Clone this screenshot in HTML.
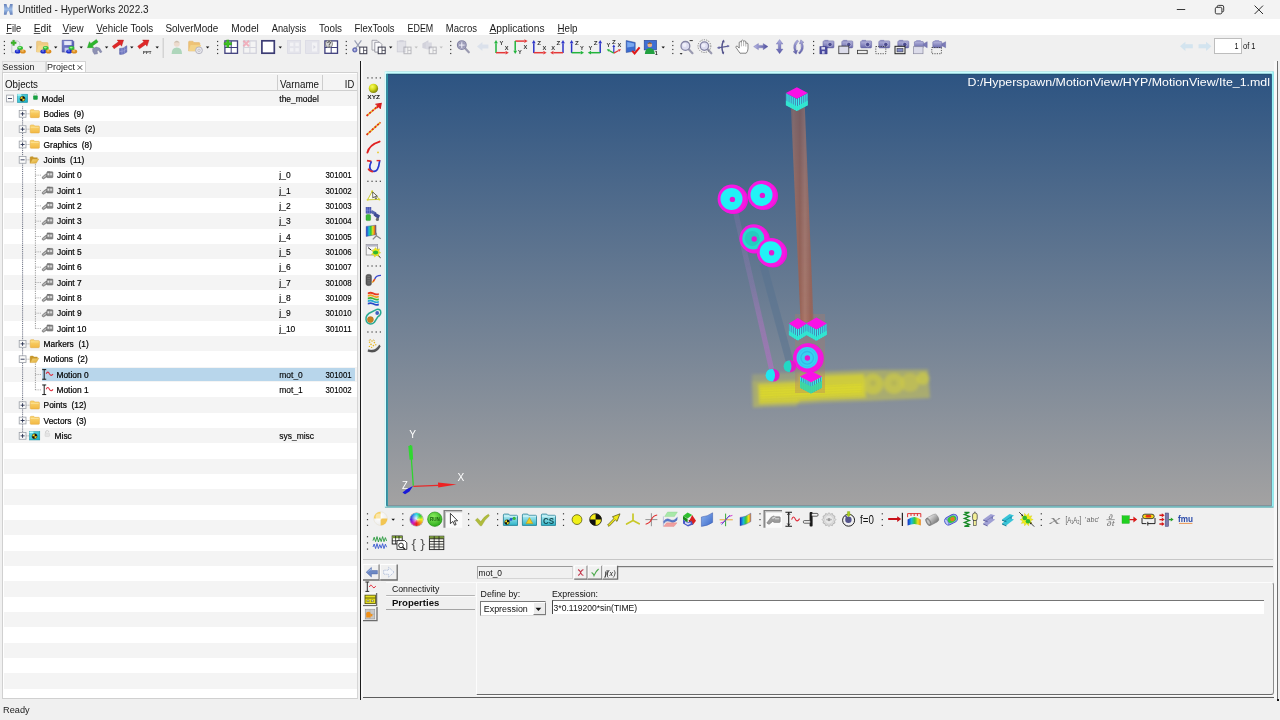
<!DOCTYPE html><html><head><meta charset="utf-8"><title>Untitled - HyperWorks 2022.3</title><style>
html,body{margin:0;padding:0;}
body{width:1280px;height:720px;overflow:hidden;background:#f0f0f0;font-family:"Liberation Sans",sans-serif;position:relative;color:#000;}
.a{position:absolute;}
svg{position:absolute;left:0;top:0;will-change:transform;}
svg text{font-family:"Liberation Sans",sans-serif;white-space:pre;}
svg text.sf{font-family:"Liberation Serif",serif;}
</style></head><body>
<div class="a" style="left:0;top:0;width:1280px;height:19px;background:#f3f3f3;"></div>
<div class="a" style="left:0;top:19px;width:1280px;height:16px;background:#fff;"></div>
<div class="a" style="left:1214px;top:38px;width:28px;height:16px;background:#fff;border:1px solid #bdbdbd;box-sizing:border-box;"></div>
<div class="a" style="left:2px;top:61px;width:44px;height:12px;border:1px solid #dcdcdc;border-bottom:none;box-sizing:border-box;background:#f1f1f1"></div>
<div class="a" style="left:46px;top:61px;width:40px;height:13px;background:#fff;border:1px solid #d4d4d4;border-bottom:none;box-sizing:border-box;"></div>
<div class="a" style="left:1.8px;top:71.8px;width:356.6px;height:627.6px;border:1.7px solid #d0d0d0;border-right:1.2px solid #d6d6d6;border-bottom:1.2px solid #d0d0d0;box-sizing:border-box;background:#fff;"></div>
<div class="a" style="left:3.6px;top:90.60px;width:353.4px;height:15.34px;background:#f4f4f4;"></div>
<div class="a" style="left:3.6px;top:121.27px;width:353.4px;height:15.33px;background:#f4f4f4;"></div>
<div class="a" style="left:3.6px;top:151.94px;width:353.4px;height:15.34px;background:#f4f4f4;"></div>
<div class="a" style="left:3.6px;top:182.61px;width:353.4px;height:15.33px;background:#f4f4f4;"></div>
<div class="a" style="left:3.6px;top:213.28px;width:353.4px;height:15.34px;background:#f4f4f4;"></div>
<div class="a" style="left:3.6px;top:243.95px;width:353.4px;height:15.33px;background:#f4f4f4;"></div>
<div class="a" style="left:3.6px;top:274.62px;width:353.4px;height:15.34px;background:#f4f4f4;"></div>
<div class="a" style="left:3.6px;top:305.29px;width:353.4px;height:15.34px;background:#f4f4f4;"></div>
<div class="a" style="left:3.6px;top:335.96px;width:353.4px;height:15.33px;background:#f4f4f4;"></div>
<div class="a" style="left:3.6px;top:366.63px;width:353.4px;height:15.34px;background:#f4f4f4;"></div>
<div class="a" style="left:3.6px;top:397.30px;width:353.4px;height:15.33px;background:#f4f4f4;"></div>
<div class="a" style="left:3.6px;top:427.97px;width:353.4px;height:15.34px;background:#f4f4f4;"></div>
<div class="a" style="left:3.6px;top:458.64px;width:353.4px;height:15.34px;background:#f4f4f4;"></div>
<div class="a" style="left:3.6px;top:489.31px;width:353.4px;height:15.33px;background:#f4f4f4;"></div>
<div class="a" style="left:3.6px;top:519.98px;width:353.4px;height:15.34px;background:#f4f4f4;"></div>
<div class="a" style="left:3.6px;top:550.65px;width:353.4px;height:15.34px;background:#f4f4f4;"></div>
<div class="a" style="left:3.6px;top:581.32px;width:353.4px;height:15.33px;background:#f4f4f4;"></div>
<div class="a" style="left:3.6px;top:611.99px;width:353.4px;height:15.34px;background:#f4f4f4;"></div>
<div class="a" style="left:3.6px;top:642.66px;width:353.4px;height:15.33px;background:#f4f4f4;"></div>
<div class="a" style="left:3.6px;top:673.33px;width:353.4px;height:15.34px;background:#f4f4f4;"></div>
<div class="a" style="left:3.6px;top:73.5px;width:353.4px;height:17.3px;background:#f4f4f4;border-bottom:1px solid #cfcfcf;box-sizing:border-box;"></div>
<div class="a" style="left:277px;top:75px;width:1px;height:15px;background:#cdcdcd;"></div>
<div class="a" style="left:322px;top:75px;width:1px;height:15px;background:#cdcdcd;"></div>
<div class="a" style="left:42px;top:367.53px;width:313.4px;height:13.84px;background:#b8d6eb;"></div>
<div class="a" style="left:359.5px;top:61px;width:1.5px;height:639px;background:#1c1c1c;"></div>
<div class="a" style="left:362px;top:559px;width:911px;height:1px;background:#c6c6c6;"></div>
<div class="a" style="left:618px;top:565.8px;width:655px;height:1.3px;background:#7a7a7a;"></div>
<div class="a" style="left:618px;top:567.1px;width:655px;height:0.8px;background:#d8d8d8;"></div>
<div class="a" style="left:1274px;top:61px;width:3px;height:638px;background:#f8f8f8;"></div>
<div class="a" style="left:1277px;top:61px;width:1.3px;height:639px;background:#6e6e6e;"></div>
<div class="a" style="left:1276.6px;top:699.4px;width:2px;height:1.2px;background:#111;"></div>
<div class="a" style="left:361px;top:61px;width:2px;height:636px;background:#f8f8f8;"></div>
<div class="a" style="left:475.6px;top:581.6px;width:798.8px;height:113.4px;border-left:1px solid #fcfcfc;border-top:1px solid #fcfcfc;border-bottom:1.3px solid #6a6a6a;border-right:1px solid #8c8c8c;border-radius:0 3px 3px 0;box-sizing:border-box;background:#f1f1f1;"></div>
<div class="a" style="left:476px;top:695.2px;width:797px;height:1px;background:#fafafa;"></div>
<div class="a" style="left:363px;top:696.7px;width:911px;height:1.3px;background:#5c5c5c;"></div>
<div class="a" style="left:477px;top:566.2px;width:96.4px;height:12.6px;border:1px solid #d4d4d4;border-top:1px solid #9a9a9a;border-left:1px solid #a8a8a8;box-sizing:border-box;background:#f0f0f0;"></div>
<div class="a" style="left:385.6px;top:582.4px;width:90px;height:1px;background:#fbfbfb;"></div>
<div class="a" style="left:385.6px;top:594.9px;width:89.6px;height:1px;background:#b4b4b4;border-radius:1px;"></div>
<div class="a" style="left:385.6px;top:596px;width:90px;height:1px;background:#fafafa;"></div>
<div class="a" style="left:385.6px;top:609px;width:89.6px;height:1px;background:#a4a4a4;"></div>
<div class="a" style="left:480.2px;top:600.5px;width:66px;height:15.2px;border-top:1.7px solid #7a7a7a;border-left:1.7px solid #7a7a7a;border-right:1px solid #dcdcdc;border-bottom:1px solid #dcdcdc;box-sizing:border-box;background:#fff;"></div>
<div class="a" style="left:532.6px;top:602px;width:13px;height:13px;background:#ececec;border-right:1.2px solid #7c7c7c;border-bottom:1.2px solid #7c7c7c;border-left:1px solid #fff;border-top:1px solid #fff;box-sizing:border-box;"></div>
<div class="a" style="left:551.6px;top:600.4px;width:712.6px;height:13.6px;background:#fff;border-top:1.8px solid #757575;border-left:1.3px solid #444;box-sizing:border-box;"></div>
<div class="a" style="left:409.8px;top:512.7px;width:13px;height:13px;border-radius:50%;background:radial-gradient(circle at 45% 42%,rgba(255,255,255,0.85) 0,rgba(255,255,255,0) 45%),conic-gradient(from 0deg,#20d8e0,#30d040,#e8f020,#f09020,#e82020,#d020c0,#5028d8,#2070e8,#20d8e0);box-shadow:0 0 0 0.5px rgba(60,60,60,0.5);"></div>
<svg width="1280" height="720" viewBox="0 0 1280 720">
<defs>
<linearGradient id="vg" x1="0" y1="0" x2="0" y2="1"><stop offset="0" stop-color="#2d5482"/><stop offset="1" stop-color="#a3a2a2"/></linearGradient>
<linearGradient id="rod" x1="0" y1="0" x2="1" y2="0"><stop offset="0" stop-color="#a8705f" stop-opacity="0.75"/><stop offset="0.12" stop-color="#a8705f"/><stop offset="0.4" stop-color="#9d5f4e"/><stop offset="0.62" stop-color="#ae7767"/><stop offset="0.88" stop-color="#9c6152"/><stop offset="1" stop-color="#9c6152" stop-opacity="0.7"/></linearGradient>
<linearGradient id="rodfade" gradientUnits="userSpaceOnUse" x1="0" y1="106" x2="0" y2="322"><stop offset="0" stop-color="#fff" stop-opacity="0.62"/><stop offset="0.5" stop-color="#fff" stop-opacity="0.8"/><stop offset="1" stop-color="#fff" stop-opacity="0.9"/></linearGradient>
<mask id="rodm"><rect x="780" y="100" width="50" height="230" fill="url(#rodfade)"/></mask>
<filter id="bl1" x="-20%" y="-50%" width="140%" height="200%"><feGaussianBlur stdDeviation="1.6"/></filter>
<filter id="bl03" x="-20%" y="-5%" width="140%" height="110%"><feGaussianBlur stdDeviation="0.45"/></filter>
<pattern id="cst" width="1.9" height="4" patternUnits="userSpaceOnUse"><rect width="1.9" height="4" fill="#3e86ac"/><rect width="0.95" height="4" fill="#3cf0f4"/></pattern>
<linearGradient id="pl" gradientUnits="userSpaceOnUse" x1="0" y1="212" x2="0" y2="369"><stop offset="0" stop-color="#9a78b8" stop-opacity="0.22"/><stop offset="0.45" stop-color="#9a78b8" stop-opacity="0.38"/><stop offset="0.7" stop-color="#aa74be" stop-opacity="0.55"/><stop offset="1" stop-color="#b070c2" stop-opacity="0.66"/></linearGradient>
</defs>
<rect x="384.9" y="71.5" width="888.7" height="436.3" fill="#74b8bc"/>
<rect x="1271.6" y="71.5" width="2" height="435" fill="#93f2f6"/>
<rect x="384.9" y="71.5" width="887.5" height="2.3" fill="#c8feff"/>
<rect x="384.9" y="71.5" width="1.6" height="435.2" fill="#d4ffff"/>
<rect x="386.3" y="73.8" width="885.4" height="431.9" fill="#1f4e72"/>
<rect x="386.5" y="74.2" width="1.5" height="431.5" fill="#2c9aaa"/>
<rect x="387.9" y="74.9" width="883.8" height="430.8" fill="url(#vg)"/>
<g filter="url(#bl1)">
<polygon points="752,374.5 797,372.5 797,380 752,382" fill="#cfcc4a" opacity="0.28"/>
<polygon points="752,381.5 797,379.5 797,372.5 866,370 928,369.5 930,398 868,401 822,402.5 797,404 797,406 753,407.5" fill="#cdca48" opacity="0.5"/>
<polygon points="758,384 799,382 799,376.5 864,374 866,397.5 822,399 799,400.5 799,402.5 759,404" fill="#e2de26" opacity="0.66"/>
<polygon points="760,388 820,385.5 862,383.5 862,393 820,395 760,398.5" fill="#ece618" opacity="0.4"/>
<circle cx="873" cy="384" r="10.5" fill="#d6d238" opacity="0.6"/>
<circle cx="894" cy="383.5" r="10.5" fill="#d2ce40" opacity="0.6"/>
<circle cx="910" cy="382.5" r="9.5" fill="#cfcb46" opacity="0.55"/>
<circle cx="923" cy="378.5" r="6.5" fill="#d4d040" opacity="0.6"/>
<circle cx="873" cy="383" r="3" fill="#a8a860" opacity="0.5"/>
<circle cx="894" cy="383" r="3" fill="#a8a860" opacity="0.4"/>
</g>
<path d="M760 387.0 L822 384.5 L862 382.9" stroke="#c8c43a" stroke-width="0.5" opacity="0.55" fill="none"/>
<path d="M760 389.5 L822 387.0 L862 385.4" stroke="#c8c43a" stroke-width="0.5" opacity="0.55" fill="none"/>
<path d="M760 392.0 L822 389.5 L862 387.9" stroke="#c8c43a" stroke-width="0.5" opacity="0.55" fill="none"/>
<path d="M760 394.5 L822 392.0 L862 390.4" stroke="#c8c43a" stroke-width="0.5" opacity="0.55" fill="none"/>
<path d="M760 397.0 L822 394.5 L862 392.9" stroke="#c8c43a" stroke-width="0.5" opacity="0.55" fill="none"/>
<path d="M760 399.5 L822 397.0 L862 395.4" stroke="#c8c43a" stroke-width="0.5" opacity="0.55" fill="none"/>
<path d="M760 402.0 L822 399.5 L862 397.9" stroke="#c8c43a" stroke-width="0.5" opacity="0.55" fill="none"/>
<rect x="795" y="314" width="30" height="79" fill="#b07a68" opacity="0.33"/>
<line x1="735.5" y1="212" x2="771.5" y2="369" stroke="url(#pl)" stroke-width="5.2" filter="url(#bl03)"/>
<line x1="763" y1="264" x2="789.5" y2="361" stroke="#567290" stroke-width="7.6" opacity="0.5" filter="url(#bl03)"/>
<g mask="url(#rodm)"><polygon points="790.8,106 804.8,106 813.6,322 800.6,322" fill="url(#rod)" filter="url(#bl03)"/></g>
<polygon points="785.9,93.1 796.9,98.8 807.8,93.1 807.8,105.19999999999999 796.9,110.89999999999999 785.9,105.19999999999999" fill="url(#cst)"/>
<polygon points="785.9,100.60 796.9,106.30 807.8,100.60 807.8,105.19999999999999 796.9,110.89999999999999 785.9,105.19999999999999" fill="#30e8d0" opacity="0.92"/>
<polygon points="785.9,93.1 796.9,87.2 807.8,93.1 796.9,98.8" fill="#fb10e6"/>
<circle cx="733.6999999999999" cy="199.7" r="14.3" fill="#ee14da"/><circle cx="732.0" cy="199.0" r="14.4" fill="#f618e2"/><circle cx="731.5" cy="198.89999999999998" r="11" fill="#22f2f6"/><circle cx="732.4" cy="199.39999999999998" r="2.7" fill="#e21ad0"/>
<circle cx="763.6999999999999" cy="195.7" r="14.3" fill="#ee14da"/><circle cx="762.0" cy="195.0" r="14.4" fill="#f618e2"/><circle cx="761.5" cy="194.89999999999998" r="11" fill="#22f2f6"/><circle cx="762.4" cy="195.39999999999998" r="2.7" fill="#e21ad0"/>
<circle cx="755.5" cy="239.3" r="14.3" fill="#ee14da"/><circle cx="753.8000000000001" cy="238.60000000000002" r="14.4" fill="#f618e2"/><circle cx="753.3000000000001" cy="238.5" r="11" fill="#26dccc"/><circle cx="752.2" cy="238.4" r="7.5" fill="#24c0b4" opacity="0.55"/><circle cx="754.2" cy="239.0" r="2.7" fill="#e21ad0"/>
<circle cx="772.9" cy="253.1" r="14.3" fill="#ee14da"/><circle cx="771.2" cy="252.4" r="14.4" fill="#f618e2"/><circle cx="770.7" cy="252.29999999999998" r="11" fill="#22f2f6"/><circle cx="771.6" cy="252.79999999999998" r="2.7" fill="#e21ad0"/>
<polygon points="788.9,323.6 797.8,329.2 806.7,323.6 806.7,335.0 797.8,340.59999999999997 788.9,335.0" fill="url(#cst)"/>
<polygon points="788.9,330.67 797.8,336.27 806.7,330.67 806.7,335.0 797.8,340.59999999999997 788.9,335.0" fill="#30e8d0" opacity="0.92"/>
<polygon points="788.9,323.6 797.8,318 806.7,323.6 797.8,329.2" fill="#fb10e6"/>
<polygon points="806,323.4 816.4,329.4 826.8,323.4 826.8,334.79999999999995 816.4,340.79999999999995 806,334.79999999999995" fill="url(#cst)"/>
<polygon points="806,330.47 816.4,336.47 826.8,330.47 826.8,334.79999999999995 816.4,340.79999999999995 806,334.79999999999995" fill="#30e8d0" opacity="0.92"/>
<polygon points="806,323.4 816.4,317.6 826.8,323.4 816.4,329.4" fill="#fb10e6"/>
<circle cx="809.2" cy="358.2" r="14.6" fill="#ee18d8"/><circle cx="807.6" cy="357.8" r="14.6" fill="#f416de"/><circle cx="807.2" cy="357.8" r="10.7" fill="#38d2f2"/><circle cx="807.2" cy="357.8" r="6.3" fill="none" stroke="#30bce6" stroke-width="1.3"/><circle cx="807.2" cy="357.8" r="9" fill="none" stroke="#34c4ec" stroke-width="0.8"/><circle cx="807.4" cy="358" r="2.7" fill="#e21ad0"/>
<polygon points="800,376.6 811,382.2 822,376.6 822,387.8 811,393.4 800,387.8" fill="url(#cst)"/>
<polygon points="800,380.86 811,386.46 822,380.86 822,387.8 811,393.4 800,387.8" fill="#40d89c" opacity="0.92"/>
<polygon points="800,376.6 811,371 822,376.6 811,382.2" fill="#fb10e6"/>
<circle cx="790.2" cy="366.3" r="6" fill="#e418cc"/><path d="M789.6 360.3 A6 6 0 1 0 789.6 372.3 A11 11 0 0 0 789.6 360.3Z" fill="#22d8c4"/>
<circle cx="773.3" cy="375.2" r="6.3" fill="#e418cc"/><path d="M773 369 A6.3 6.3 0 1 0 773 381.4 A11 11 0 0 0 773 369Z" fill="#20e6f0"/>
<g>
<line x1="413.3" y1="485.8" x2="410.4" y2="445" stroke="#2fd42f" stroke-width="1.3"/>
<polygon points="408.3,446 412.3,445.6 413.2,459.5 409.6,459.8" fill="#30d830"/>
<line x1="413.3" y1="486.3" x2="438" y2="485.3" stroke="#e62a2a" stroke-width="1.2"/>
<polygon points="438,482.6 456.6,484.4 438.2,487.6" fill="#ee2222"/>
<path d="M413 486 L407 489 L402.5 492.5 L405 494.3 L409.5 491.5 Z" fill="#1a1ad8"/>
</g>
<defs><linearGradient id="hg" x1="0" y1="0" x2="0" y2="1"><stop offset="0" stop-color="#6580b8"/><stop offset="0.5" stop-color="#9cbce8"/><stop offset="1" stop-color="#6580b8"/></linearGradient></defs>
<path d="M3.9 3.9 L6.5 3.9 Q7.1 7.2 8.3 8 Q9.5 7.2 10.1 3.9 L12.7 3.9 Q12.1 9.3 12.7 14.7 L10.1 14.7 Q9.5 11.4 8.3 10.6 Q7.1 11.4 6.5 14.7 L3.9 14.7 Q4.5 9.3 3.9 3.9 Z" fill="url(#hg)"/>
<rect x="1176.8" y="9.1" width="8.4" height="0.9" fill="#222"/>
<rect x="1215.3" y="7.3" width="6.6" height="6.6" rx="1.5" fill="none" stroke="#222" stroke-width="0.9"/><path d="M1217.2 7.2 v-0.5 q0 -1.3 1.3 -1.3 h3.6 q1.6 0 1.6 1.6 v3.6 q0 1.2 -1.2 1.2 h-0.5" fill="none" stroke="#222" stroke-width="0.9"/>
<path d="M1254.6 5.6 l8.4 8.4 M1263 5.6 l-8.4 8.4" stroke="#222" stroke-width="0.95" fill="none"/>
<path d="M77.6 65.2 l4.6 4.6 M82.2 65.2 l-4.6 4.6" stroke="#333" stroke-width="0.9"/>
<defs><linearGradient id="fl" x1="0" y1="0" x2="1" y2="1"><stop offset="0" stop-color="#8890d8"/><stop offset="1" stop-color="#3c44a0"/></linearGradient><linearGradient id="cam" x1="0" y1="0" x2="0" y2="1"><stop offset="0" stop-color="#b4b4dc"/><stop offset="1" stop-color="#6a6aac"/></linearGradient><linearGradient id="arh" x1="0" y1="0" x2="1" y2="0"><stop offset="0" stop-color="#b8b8e4"/><stop offset="1" stop-color="#4c4c9c"/></linearGradient><linearGradient id="arb" x1="0" y1="0" x2="0" y2="1"><stop offset="0" stop-color="#b0b0e0"/><stop offset="1" stop-color="#5a5aa8"/></linearGradient></defs>
<rect x="3.80" y="40.90" width="1.2" height="1.2" fill="#3a3a3a"/>
<rect x="3.80" y="44.90" width="1.2" height="1.2" fill="#3a3a3a"/>
<rect x="3.80" y="48.90" width="1.2" height="1.2" fill="#3a3a3a"/>
<rect x="3.80" y="52.90" width="1.2" height="1.2" fill="#3a3a3a"/>
<path d="M11.799999999999999 41.0 h6.2 l1.8 1.8 v10 h-8z" fill="#eef0f2" stroke="#a8b0b8" stroke-width="0.6"/>
<path d="M11.0 41.9 h1.7 v-1.7 h1.8 v1.7 h1.7 v1.8 h-1.7 v1.7 h-1.8 v-1.7 h-1.7z" fill="#3cb828" stroke="#2a8a1c" stroke-width="0.3"/>
<ellipse cx="20.10" cy="48.10" rx="2.9" ry="2.1" fill="#35c035"/><ellipse cx="19.70" cy="47.60" rx="1.5" ry="0.8" fill="#9df09d"/>
<ellipse cx="17.70" cy="51.50" rx="2.9" ry="2.1" fill="#1c2ccc"/><ellipse cx="17.30" cy="50.90" rx="1.4" ry="0.7" fill="#8a96f0"/>
<ellipse cx="22.90" cy="51.50" rx="2.9" ry="2.1" fill="#dc8c1c"/><ellipse cx="22.50" cy="50.90" rx="1.4" ry="0.7" fill="#f8d088"/>
<path d="M28.90 46.50 h3.4 l-1.7 1.9z" fill="#111"/>
<path d="M36.6 52.0 v-10 q0 -0.8 0.8 -0.8 h3.4 l1.2 1.4 h5.2 q0.8 0 0.8 0.8 v8.6z" fill="#f0c878" stroke="#e0aa50" stroke-width="0.5" opacity="0.9"/>
<path d="M36.6 52.0 l2 -6.5 h10.6 l-2.4 6.5z" fill="#f6d890" opacity="0.95"/>
<ellipse cx="45.70" cy="48.10" rx="2.9" ry="2.1" fill="#35c035"/><ellipse cx="45.30" cy="47.60" rx="1.5" ry="0.8" fill="#9df09d"/>
<ellipse cx="43.30" cy="51.50" rx="2.9" ry="2.1" fill="#1c2ccc"/><ellipse cx="42.90" cy="50.90" rx="1.4" ry="0.7" fill="#8a96f0"/>
<ellipse cx="48.50" cy="51.50" rx="2.9" ry="2.1" fill="#dc8c1c"/><ellipse cx="48.10" cy="50.90" rx="1.4" ry="0.7" fill="#f8d088"/>
<path d="M54.00 46.50 h3.4 l-1.7 1.9z" fill="#111"/>
<path d="M62.2 40.3 h10.4 l1.2 1.2 v10.6 h-11.6z" fill="url(#fl)" stroke="#34388c" stroke-width="0.5"/>
<rect x="64.2" y="41.1" width="7.4" height="4" fill="#e6e8f8"/><rect x="64.6" y="47.7" width="5" height="4.2" fill="#c4c8ec"/>
<ellipse cx="71.50" cy="48.10" rx="2.9" ry="2.1" fill="#35c035"/><ellipse cx="71.10" cy="47.60" rx="1.5" ry="0.8" fill="#9df09d"/>
<ellipse cx="69.10" cy="51.50" rx="2.9" ry="2.1" fill="#1c2ccc"/><ellipse cx="68.70" cy="50.90" rx="1.4" ry="0.7" fill="#8a96f0"/>
<ellipse cx="74.30" cy="51.50" rx="2.9" ry="2.1" fill="#dc8c1c"/><ellipse cx="73.90" cy="50.90" rx="1.4" ry="0.7" fill="#f8d088"/>
<path d="M79.50 46.50 h3.4 l-1.7 1.9z" fill="#111"/>
<polygon points="96.33,39.48 90.76,43.46 89.48,41.67 87.40,47.70 93.78,47.69 92.50,45.90 98.07,41.92" fill="#2cb82c" stroke="#1e8e1e" stroke-width="0.4"/>
<path d="M92.6 48.7 l3.6 -1.6 l3.4 1 l2.4 3.8 l-1.8 0.8 l-1.6 -2.4 l-1.6 0.4 l0.6 3 l-3.2 0.6 l-1.6 -2.6z" fill="#8e92b4" stroke="#6c7096" stroke-width="0.4"/>
<path d="M104.90 46.50 h3.4 l-1.7 1.9z" fill="#111"/>
<polygon points="114.10,48.76 120.26,44.38 121.57,46.21 123.60,40.10 117.16,40.02 118.46,41.85 112.30,46.24" fill="#e02828" stroke="#b01818" stroke-width="0.4"/>
<path d="M119.6 48.5 q3.4 0.6 7.2 -2.8 v6.4 q-3.6 3 -7.2 2.2z" fill="#7078c0" stroke="#4c54a0" stroke-width="0.5"/><path d="M122 48.4 v6 M124.4 47.3 v6.2 M119.6 51.5 q3.6 0.4 7.2 -2.6" stroke="#b8bce8" stroke-width="0.4" fill="none"/>
<path d="M130.10 46.50 h3.4 l-1.7 1.9z" fill="#111"/>
<polygon points="139.50,48.76 145.66,44.38 146.97,46.21 149.00,40.10 142.56,40.02 143.86,41.85 137.70,46.24" fill="#e02828" stroke="#b01818" stroke-width="0.4"/>
<text x="143.0" y="53.7" font-size="4.4" font-weight="bold" fill="#222" textLength="8.4" lengthAdjust="spacingAndGlyphs">PPT</text>
<path d="M155.50 46.50 h3.4 l-1.7 1.9z" fill="#111"/>
<rect x="162.7" y="38" width="0.9" height="20" fill="#c2c2c2"/>
<g opacity="0.36"><circle cx="176.79999999999998" cy="43.7" r="3" fill="#e8b890"/><path d="M174.2 43.1 q2.6 -4.6 5.2 0 q-2.6 -1.6 -5.2 0z" fill="#8a6a40"/><path d="M171.6 53.9 q0.2 -6.4 5.2 -6.4 q5 0 5.2 6.4z" fill="#3aa860"/></g>
<g opacity="0.8"><path d="M188.6 51.0 v-9 q0 -0.8 0.8 -0.8 h3.4 l1.2 1.4 h5 q0.8 0 0.8 0.8 v7.6z" fill="#eeb858" stroke="#dca040" stroke-width="0.5"/><path d="M188.6 51.0 l2 -6 h10.4 l-2.4 6z" fill="#f4cc70"/></g>
<circle cx="199" cy="50.3" r="3.4" fill="#e8e8ee" stroke="#b0b0bc" stroke-width="0.9"/><circle cx="199" cy="50.3" r="1.2" fill="#f4f4f4" stroke="#a8a8b4" stroke-width="0.6"/>
<path d="M205.90 46.50 h3.4 l-1.7 1.9z" fill="#111"/>
<rect x="217.00" y="40.90" width="1.2" height="1.2" fill="#3a3a3a"/>
<rect x="217.00" y="44.90" width="1.2" height="1.2" fill="#3a3a3a"/>
<rect x="217.00" y="48.90" width="1.2" height="1.2" fill="#3a3a3a"/>
<rect x="217.00" y="52.90" width="1.2" height="1.2" fill="#3a3a3a"/>
<g opacity="1"><rect x="224.9" y="40.9" width="12.6" height="12.4" fill="#fff" stroke="#3e3e7c" stroke-width="1.3"/><path d="M231.20000000000002 40.9 v12.4 M224.9 47.5 h12.6" stroke="#3e3e7c" stroke-width="1"/></g>
<path d="M224 42.5 h2.6 v-2.6 h2.4 v2.6 h2.6 v2.4 h-2.6 v2.6 h-2.4 v-2.6 h-2.6z" fill="#3cc020" stroke="#288a14" stroke-width="0.4"/>
<g opacity="0.28"><rect x="243.6" y="40.9" width="12.6" height="12.4" fill="#fff" stroke="#8888aa" stroke-width="1.3"/><path d="M249.9 40.9 v12.4 M243.6 47.5 h12.6" stroke="#8888aa" stroke-width="1"/></g>
<path d="M243.4 40.7 l5.6 5.6 M249 40.7 l-5.6 5.6" stroke="#f0a0b0" stroke-width="2" opacity="0.8"/>
<rect x="261.9" y="40.8" width="12.4" height="12.4" fill="#fff" stroke="#3c3c74" stroke-width="1.7"/>
<path d="M278.60 46.50 h3.4 l-1.7 1.9z" fill="#111"/>
<g opacity="0.5"><rect x="287.6" y="40.5" width="13" height="13" fill="#d8d8e6" stroke="#c4c4d8" stroke-width="0.8"/><rect x="290" y="42.7" width="3.4" height="3.4" fill="#f4f4fa"/><rect x="295.4" y="42.7" width="3.4" height="3.4" fill="#f4f4fa"/><rect x="290" y="48.1" width="3.4" height="3.4" fill="#f4f4fa"/><rect x="295.4" y="48.1" width="3.4" height="3.4" fill="#f4f4fa"/></g>
<g opacity="0.5"><rect x="305.6" y="40.5" width="13.4" height="13" fill="#d8d8e6" stroke="#c4c4d8" stroke-width="0.8"/><rect x="312" y="42.5" width="5" height="9" fill="#f4f4fa"/><path d="M313.4 44.9 l2.4 2.1 l-2.4 2.1z" fill="#c0c0d4"/></g>
<g opacity="1"><rect x="324.9" y="40.9" width="12.6" height="12.4" fill="#fff" stroke="#3e3e7c" stroke-width="1.3"/><path d="M331.2 40.9 v12.4 M324.9 47.5 h12.6" stroke="#3e3e7c" stroke-width="1"/></g>
<circle cx="329" cy="43.9" r="3.6" fill="#d8d8d8" stroke="#555" stroke-width="0.6"/><path d="M327.6 43.1 q0.2 -1.6 1.6 -1.5 q1.5 0.2 1.2 1.5 q-0.2 0.8 -1.2 1.3 v0.9" stroke="#222" stroke-width="0.8" fill="none"/><rect x="328.7" y="45.8" width="0.9" height="0.9" fill="#222"/>
<rect x="345.70" y="40.90" width="1.2" height="1.2" fill="#3a3a3a"/>
<rect x="345.70" y="44.90" width="1.2" height="1.2" fill="#3a3a3a"/>
<rect x="345.70" y="48.90" width="1.2" height="1.2" fill="#3a3a3a"/>
<rect x="345.70" y="52.90" width="1.2" height="1.2" fill="#3a3a3a"/>
<path d="M354.6 40.3 l5.6 8 M361.4 40.3 l-5.8 8" stroke="#9aa0b4" stroke-width="1.2" fill="none"/><circle cx="354.8" cy="49.9" r="2.2" fill="#7c84c8" stroke="#4a52a0" stroke-width="0.7"/><circle cx="354.8" cy="49.9" r="0.8" fill="#dde"/>
<g opacity="1"><rect x="359.8" y="47.1" width="7" height="6.6" fill="#fff" stroke="#3a3a4a" stroke-width="1"/><path d="M363.6 47.1 v6.6 M363.6 50.4 h3.2" stroke="#3a3a4a" stroke-width="0.8"/></g>
<path d="M372.0 40.3 h5 l2 2 v7.8 h-7z" fill="#f4f4f6" stroke="#8a8a96" stroke-width="0.7"/><path d="M374.8 42.3 h5 l2 2 v7.8 h-7z" fill="#fafafc" stroke="#7a7a86" stroke-width="0.7"/>
<g opacity="1"><rect x="378.2" y="47.1" width="7" height="6.6" fill="#fff" stroke="#3a3a4a" stroke-width="1"/><path d="M382.0 47.1 v6.6 M382.0 50.4 h3.2" stroke="#3a3a4a" stroke-width="0.8"/></g>
<path d="M389.00 46.50 h3.4 l-1.7 1.9z" fill="#111"/>
<g opacity="0.38"><rect x="397.2" y="41.1" width="8.6" height="10.8" fill="#c8c8d8" stroke="#9090a8" stroke-width="0.7"/><rect x="399.4" y="40.1" width="4.2" height="2" fill="#a0a0b8"/></g>
<g opacity="0.3"><rect x="404.0" y="47.1" width="7" height="6.6" fill="#fff" stroke="#3a3a4a" stroke-width="1"/><path d="M407.8 47.1 v6.6 M407.8 50.4 h3.2" stroke="#3a3a4a" stroke-width="0.8"/></g>
<path d="M414.50 46.50 h3.4 l-1.7 1.9z" fill="#c0c0c0"/>
<g opacity="0.38"><path d="M422.40000000000003 43.5 l6 -3.2 v9.2 l-6 -1.6z" fill="#a0a0b8"/><rect x="425.8" y="42.5" width="6" height="6.6" fill="#b4b4c8"/></g>
<g opacity="0.3"><rect x="429.2" y="47.1" width="7" height="6.6" fill="#fff" stroke="#3a3a4a" stroke-width="1"/><path d="M433.0 47.1 v6.6 M433.0 50.4 h3.2" stroke="#3a3a4a" stroke-width="0.8"/></g>
<path d="M439.50 46.50 h3.4 l-1.7 1.9z" fill="#c0c0c0"/>
<rect x="450.10" y="40.90" width="1.2" height="1.2" fill="#3a3a3a"/>
<rect x="450.10" y="44.90" width="1.2" height="1.2" fill="#3a3a3a"/>
<rect x="450.10" y="48.90" width="1.2" height="1.2" fill="#3a3a3a"/>
<rect x="450.10" y="52.90" width="1.2" height="1.2" fill="#3a3a3a"/>
<path d="M464.81 48.11 l4 4.2" stroke="#9a9ab0" stroke-width="2.2" stroke-linecap="round"/><circle cx="461.8" cy="45.1" r="4.3" fill="#dcdcf0" stroke="#8484a4" stroke-width="1.3"/><circle cx="461.0" cy="44.300000000000004" r="1.94" fill="#f4f4fc" opacity="0.8"/>
<circle cx="461.8" cy="45.1" r="3.6999999999999997" fill="#9c9cb8"/><path d="M461.8 42.300000000000004 v5.6 M459.0 45.1 h5.6" stroke="#f4f4fc" stroke-width="1"/>
<path d="M477 46.5 l5.4 -4.6 v2.6 h6 v4 h-6 v2.6z" fill="#d4dcea" opacity="0.75"/>
<path d="M496.00 52.90 L496.00 43.35" stroke="#22b43c" stroke-width="1.5"/><path d="M496.00 40.10 L497.88 43.35 L494.12 43.35z" fill="#22b43c"/>
<path d="M496.00 52.70 L505.55 52.70" stroke="#e43838" stroke-width="1.5"/><path d="M508.80 52.70 L505.55 54.58 L505.55 50.83z" fill="#e43838"/>
<text x="499.40000000000003" y="45.3" font-size="5.2" font-weight="bold" fill="#333" textLength="3.8" lengthAdjust="spacingAndGlyphs">Y</text>
<text x="504.8" y="50.1" font-size="5.2" font-weight="bold" fill="#333" textLength="3.8" lengthAdjust="spacingAndGlyphs">X</text>
<path d="M515.20 41.10 L524.35 41.10" stroke="#e43838" stroke-width="1.5"/><path d="M527.60 41.10 L524.35 42.98 L524.35 39.23z" fill="#e43838"/>
<path d="M515.20 41.10 L515.20 50.85" stroke="#22b43c" stroke-width="1.5"/><path d="M515.20 54.10 L513.33 50.85 L517.08 50.85z" fill="#22b43c"/>
<text x="523.4" y="49.1" font-size="5.2" font-weight="bold" fill="#333" textLength="3.8" lengthAdjust="spacingAndGlyphs">X</text>
<text x="518" y="54.1" font-size="5.2" font-weight="bold" fill="#333" textLength="3.8" lengthAdjust="spacingAndGlyphs">Y</text>
<path d="M533.80 52.90 L533.80 43.35" stroke="#2c34c8" stroke-width="1.5"/><path d="M533.80 40.10 L535.68 43.35 L531.93 43.35z" fill="#2c34c8"/>
<path d="M533.80 52.70 L543.35 52.70" stroke="#e43838" stroke-width="1.5"/><path d="M546.60 52.70 L543.35 54.58 L543.35 50.83z" fill="#e43838"/>
<text x="537.2" y="45.3" font-size="5.2" font-weight="bold" fill="#333" textLength="3.8" lengthAdjust="spacingAndGlyphs">Z</text>
<text x="542.6" y="50.1" font-size="5.2" font-weight="bold" fill="#333" textLength="3.8" lengthAdjust="spacingAndGlyphs">X</text>
<path d="M563.00 52.90 L563.00 43.35" stroke="#2c34c8" stroke-width="1.5"/><path d="M563.00 40.10 L564.88 43.35 L561.12 43.35z" fill="#2c34c8"/>
<path d="M563.00 52.70 L553.45 52.70" stroke="#e43838" stroke-width="1.5"/><path d="M550.20 52.70 L553.45 50.83 L553.45 54.58z" fill="#e43838"/>
<text x="556.4" y="45.3" font-size="5.2" font-weight="bold" fill="#333" textLength="3.8" lengthAdjust="spacingAndGlyphs">Z</text>
<text x="551.2" y="50.1" font-size="5.2" font-weight="bold" fill="#333" textLength="3.8" lengthAdjust="spacingAndGlyphs">X</text>
<path d="M571.60 52.90 L571.60 43.35" stroke="#2c34c8" stroke-width="1.5"/><path d="M571.60 40.10 L573.48 43.35 L569.73 43.35z" fill="#2c34c8"/>
<path d="M571.60 52.70 L580.75 52.70" stroke="#22b43c" stroke-width="1.5"/><path d="M584.00 52.70 L580.75 54.58 L580.75 50.83z" fill="#22b43c"/>
<text x="575.0" y="45.3" font-size="5.2" font-weight="bold" fill="#333" textLength="3.8" lengthAdjust="spacingAndGlyphs">Z</text>
<text x="580.0" y="50.1" font-size="5.2" font-weight="bold" fill="#333" textLength="3.8" lengthAdjust="spacingAndGlyphs">Y</text>
<path d="M600.20 52.90 L600.20 43.35" stroke="#2c34c8" stroke-width="1.5"/><path d="M600.20 40.10 L602.08 43.35 L598.33 43.35z" fill="#2c34c8"/>
<path d="M600.20 52.70 L591.05 52.70" stroke="#22b43c" stroke-width="1.5"/><path d="M587.80 52.70 L591.05 50.83 L591.05 54.58z" fill="#22b43c"/>
<text x="593.8000000000001" y="45.3" font-size="5.2" font-weight="bold" fill="#333" textLength="3.8" lengthAdjust="spacingAndGlyphs">Z</text>
<text x="588.4" y="50.1" font-size="5.2" font-weight="bold" fill="#333" textLength="3.8" lengthAdjust="spacingAndGlyphs">Y</text>
<path d="M613.80 53.10 L613.80 47.10" stroke="#2c34c8" stroke-width="1.2"/><path d="M613.80 44.50 L615.30 47.10 L612.30 47.10z" fill="#2c34c8"/>
<path d="M613.80 53.10 L609.09 50.54" stroke="#22b43c" stroke-width="1.2"/><path d="M606.80 49.30 L609.80 49.22 L608.37 51.86z" fill="#22b43c"/>
<path d="M613.80 53.10 L618.70 50.51" stroke="#e43838" stroke-width="1.2"/><path d="M621.00 49.30 L619.40 51.84 L618.00 49.19z" fill="#e43838"/>
<text x="606.6" y="47.1" font-size="5.2" font-weight="bold" fill="#333" textLength="3.8" lengthAdjust="spacingAndGlyphs">Y</text>
<text x="612.0" y="43.9" font-size="5.2" font-weight="bold" fill="#333" textLength="3.8" lengthAdjust="spacingAndGlyphs">Z</text>
<text x="617.4000000000001" y="47.1" font-size="5.2" font-weight="bold" fill="#333" textLength="3.8" lengthAdjust="spacingAndGlyphs">X</text>
<path d="M626.2 40.5 l9 2 v8.6 l-9 1.4z" fill="#3c6cd0" stroke="#24408c" stroke-width="0.5"/><path d="M627.2 41.9 l7 1.6 v3 l-7 1z" fill="#7aa8f0"/><path d="M632.2 50.9 l2.4 2.6 l5 -6.2" stroke="#e01818" stroke-width="2" fill="none"/>
<rect x="644.1999999999999" y="40.3" width="12.4" height="9.6" fill="#3e6ed4" stroke="#26408c" stroke-width="0.6"/><circle cx="649.8" cy="44.9" r="2.4" fill="#e8b088"/><path d="M647.5999999999999 44.1 q2.2 -3.8 4.4 0 q-2.2 -1.2 -4.4 0z" fill="#6a4420"/><path d="M644.8 54.1 q0.4 -6 5 -6 q4.6 0 5 6z" fill="#22a040"/><text x="654.8" y="54.5" font-size="5.4" font-weight="bold" fill="#222">1</text>
<path d="M661.50 46.50 h3.4 l-1.7 1.9z" fill="#111"/>
<rect x="672.20" y="40.90" width="1.2" height="1.2" fill="#3a3a3a"/>
<rect x="672.20" y="44.90" width="1.2" height="1.2" fill="#3a3a3a"/>
<rect x="672.20" y="48.90" width="1.2" height="1.2" fill="#3a3a3a"/>
<rect x="672.20" y="52.90" width="1.2" height="1.2" fill="#3a3a3a"/>
<path d="M688.48 48.98 l4 4.2" stroke="#9a9ab0" stroke-width="2.2" stroke-linecap="round"/><circle cx="685.4" cy="45.9" r="4.4" fill="#dcdcf0" stroke="#8484a4" stroke-width="1.3"/><circle cx="684.6" cy="45.1" r="1.98" fill="#f4f4fc" opacity="0.8"/>
<rect x="689.6" y="40.1" width="3.2" height="1" fill="#333"/><path d="M679.6 53.1 h3 l-1.5 1.6z" fill="#333"/>
<path d="M707.34 49.04 l4 4.2" stroke="#9a9ab0" stroke-width="2.2" stroke-linecap="round"/><circle cx="704.4" cy="46.1" r="4.2" fill="#dcdcf0" stroke="#8484a4" stroke-width="1.3"/><circle cx="703.6" cy="45.300000000000004" r="1.89" fill="#f4f4fc" opacity="0.8"/>
<circle cx="704.4" cy="46.1" r="6.4" fill="none" stroke="#555" stroke-width="0.7" stroke-dasharray="1.2 1.2"/>
<path d="M718 47.8 L728.6 46.2" stroke="#5c5c94" stroke-width="1.3" fill="none"/><path d="M723.4 40.8 Q720.6 47 723.2 53.4" stroke="#54548c" stroke-width="1.5" fill="none"/>
<path d="M716.8 48 l2.6 -1.9 l0.4 2.8z M729.8 46 l-2.6 -1.2 l0.4 2.8z" fill="#6c6ca8"/><path d="M723.9 39.6 l-1.8 2.2 l2.6 0.8z M723.6 54.6 l-1.9 -2 l2.6 -0.9z" fill="#54548c"/>
<path d="M740 53.2 q-2.2 -3.2 -4.2 -6 q0.1 -1.5 1.6 -1 l1.8 1.9 v-5.8 q1.1 -1.4 2.2 0 v-1.5 q1.1 -1.4 2.2 0 v0.7 q1.1 -1.3 2.2 0 v2 q1.1 -1.2 2.2 0.2 v5.2 q-0.2 2.6 -1.8 4.3z" fill="#fff" stroke="#5c5c5c" stroke-width="0.75" stroke-linejoin="round"/><path d="M741.4 42.6 v3.8 M743.6 41.8 v4.4 M745.8 43.6 v3" stroke="#7a7a7a" stroke-width="0.55"/>
<path d="M753.6 46.6 l4.8 -3.1 v1.9 h4.8 v-1.9 l4.8 3.1 l-4.8 3.1 v-1.9 h-4.8 v1.9z" fill="url(#arh)" stroke="#5a5aa4" stroke-width="0.3"/>
<path d="M779.6 39.5 l3.4 4.6 h-2.1 v5 h2.1 l-3.4 4.6 l-3.4 -4.6 h2.1 v-5 h-2.1z" fill="url(#arb)" stroke="#5a5aa4" stroke-width="0.3"/>
<path d="M797.2 40 q-5.4 4.6 -2.6 11.4 l-1.6 0.2 l3.2 2.6 l1.4 -4 l-1.4 0.4 q-1.8 -5.4 2.4 -9.6z" fill="url(#arb)" stroke="#50508c" stroke-width="0.3"/><path d="M799.8 54 q5.4 -4.6 2.6 -11.4 l1.6 -0.2 l-3.2 -2.6 l-1.4 4 l1.4 -0.4 q1.8 5.4 -2.4 9.6z" fill="url(#arb)" stroke="#50508c" stroke-width="0.3"/>
<rect x="813.00" y="40.90" width="1.2" height="1.2" fill="#3a3a3a"/>
<rect x="813.00" y="44.90" width="1.2" height="1.2" fill="#3a3a3a"/>
<rect x="813.00" y="48.90" width="1.2" height="1.2" fill="#3a3a3a"/>
<rect x="813.00" y="52.90" width="1.2" height="1.2" fill="#3a3a3a"/>
<rect x="823.0" y="40.9" width="11" height="7" rx="1" fill="url(#cam)" stroke="#5c5c9c" stroke-width="0.5"/><rect x="824.4" y="39.9" width="4" height="1.4" fill="#8c8cc0"/><circle cx="830.0" cy="44.5" r="2.2" fill="#4c4c90" stroke="#d0d0ee" stroke-width="0.6"/>
<path d="M819.8 46.5 h6.4 l1 1 v6.4 h-7.4z" fill="#4a4aa0" stroke="#30307c" stroke-width="0.4"/><rect x="821.4" y="47.1" width="3.6" height="2.4" fill="#dde"/><rect x="822.0" y="51.1" width="2.6" height="2.6" fill="#c8c8e8"/>
<rect x="841.8000000000001" y="40.9" width="11" height="7" rx="1" fill="url(#cam)" stroke="#5c5c9c" stroke-width="0.5"/><rect x="843.2" y="39.9" width="4" height="1.4" fill="#8c8cc0"/><circle cx="848.8000000000001" cy="44.5" r="2.2" fill="#4c4c90" stroke="#d0d0ee" stroke-width="0.6"/>
<rect x="838.8000000000001" y="46.1" width="10" height="7.6" fill="#dcdcea" stroke="#333" stroke-width="0.8"/>
<rect x="860.6" y="40.9" width="11" height="7" rx="1" fill="url(#cam)" stroke="#5c5c9c" stroke-width="0.5"/><rect x="862" y="39.9" width="4" height="1.4" fill="#8c8cc0"/><circle cx="867.6" cy="44.5" r="2.2" fill="#4c4c90" stroke="#d0d0ee" stroke-width="0.6"/>
<rect x="857.6" y="50.3" width="9.6" height="3.4" fill="#eee" stroke="#333" stroke-width="0.8"/>
<rect x="878.8000000000001" y="40.9" width="11" height="7" rx="1" fill="url(#cam)" stroke="#5c5c9c" stroke-width="0.5"/><rect x="880.2" y="39.9" width="4" height="1.4" fill="#8c8cc0"/><circle cx="885.8000000000001" cy="44.5" r="2.2" fill="#4c4c90" stroke="#d0d0ee" stroke-width="0.6"/>
<rect x="875.8000000000001" y="46.5" width="10" height="7.2" fill="none" stroke="#333" stroke-width="0.8" stroke-dasharray="1.2 1.2"/>
<rect x="897.8000000000001" y="40.9" width="11" height="7" rx="1" fill="url(#cam)" stroke="#5c5c9c" stroke-width="0.5"/><rect x="899.2" y="39.9" width="4" height="1.4" fill="#8c8cc0"/><circle cx="904.8000000000001" cy="44.5" r="2.2" fill="#4c4c90" stroke="#d0d0ee" stroke-width="0.6"/>
<rect x="895.0" y="46.3" width="10" height="7.4" fill="#eee" stroke="#222" stroke-width="1"/><rect x="897.0" y="48.3" width="6" height="3.6" fill="#8088c8" stroke="#333" stroke-width="0.5"/>
<rect x="914.4" y="41.5" width="9" height="6.2" rx="0.8" fill="url(#cam)" stroke="#5c5c9c" stroke-width="0.5"/><rect x="916.1999999999999" y="40.1" width="4.6" height="1.6" fill="#9c9ccc"/><path d="M923.5999999999999 43.7 l3.6 -2 v6 l-3.6 -2z" fill="#7c7cb8" stroke="#5c5c9c" stroke-width="0.4"/>
<rect x="913.4" y="46.7" width="9.6" height="7" fill="#dcdcea" stroke="#8a8aa0" stroke-width="0.7"/>
<rect x="932.8000000000001" y="41.5" width="9" height="6.2" rx="0.8" fill="url(#cam)" stroke="#5c5c9c" stroke-width="0.5"/><rect x="934.6" y="40.1" width="4.6" height="1.6" fill="#9c9ccc"/><path d="M942.0 43.7 l3.6 -2 v6 l-3.6 -2z" fill="#7c7cb8" stroke="#5c5c9c" stroke-width="0.4"/>
<rect x="931.8000000000001" y="47.5" width="9.6" height="6.2" fill="none" stroke="#333" stroke-width="0.8" stroke-dasharray="1.2 1.2"/>
<path d="M1180 46.3 l5.4 -4.6 v2.6 h7.4 v4 h-7.4 v2.6z" fill="#cfe2ee" opacity="0.9"/><path d="M1211.4 46.3 l-5.4 -4.6 v2.6 h-7.4 v4 h7.4 v2.6z" fill="#cfe2ee" opacity="0.9"/>
<defs><radialGradient id="ys" cx="0.38" cy="0.32" r="0.75"><stop offset="0" stop-color="#f8fc60"/><stop offset="0.45" stop-color="#d4da18"/><stop offset="1" stop-color="#6c7008"/></radialGradient><linearGradient id="rb" x1="0" y1="0" x2="1" y2="0"><stop offset="0" stop-color="#2030d0"/><stop offset="0.3" stop-color="#20c0d0"/><stop offset="0.5" stop-color="#30c830"/><stop offset="0.7" stop-color="#e8e020"/><stop offset="1" stop-color="#e83020"/></linearGradient></defs>
<rect x="367.30" y="77.30" width="1.2" height="1.2" fill="#3a3a3a"/>
<rect x="371.45" y="77.30" width="1.2" height="1.2" fill="#3a3a3a"/>
<rect x="375.60" y="77.30" width="1.2" height="1.2" fill="#3a3a3a"/>
<rect x="379.75" y="77.30" width="1.2" height="1.2" fill="#3a3a3a"/>
<circle cx="373.4" cy="88.4" r="4.7" fill="url(#ys)"/>
<text x="367.3" y="98.9" font-size="5" font-weight="bold" fill="#111" textLength="12.8" lengthAdjust="spacingAndGlyphs">XYZ</text>
<line x1="366.6" y1="115.8" x2="377.6" y2="106.4" stroke="#e8c020" stroke-width="1.7"/><line x1="366.6" y1="115.8" x2="377.6" y2="106.4" stroke="#e02828" stroke-width="1.7" stroke-dasharray="2 1.6"/>
<path d="M381.2 103.4 l-5.8 1 l1.8 1.6 l-1 1.2 l1.4 1.2 l1 -1.2 l1.6 1.6z" fill="#e02020"/><path d="M375.4 104.2 l5.8 -0.9 l-1 5.6" fill="none" stroke="#d01818" stroke-width="1.1"/>
<line x1="366.6" y1="134.8" x2="380.4" y2="122.4" stroke="#e8c020" stroke-width="1.7"/><line x1="366.6" y1="134.8" x2="380.4" y2="122.4" stroke="#e02828" stroke-width="1.7" stroke-dasharray="2 1.6"/>
<path d="M367.4 152.6 q1.6 -7.6 12.2 -11" stroke="#e02020" stroke-width="1.9" fill="none" stroke-linecap="round"/><circle cx="378" cy="152.4" r="0.9" fill="#e8c828"/>
<path d="M367 160.6 l4.4 0.8" stroke="#e02828" stroke-width="1.6"/><path d="M371.4 161.4 q-3.6 7.4 0.8 9.6 q4.6 1.6 6.4 -4.4 l1.2 -6.4" stroke="#2838d0" stroke-width="1.7" fill="none"/><path d="M368.2 168.6 q1.4 3 5 3" stroke="#e02828" stroke-width="1.6" fill="none"/><path d="M376.6 160.6 h3.6" stroke="#e02828" stroke-width="1.4"/>
<rect x="367.30" y="180.70" width="1.2" height="1.2" fill="#3a3a3a"/>
<rect x="371.45" y="180.70" width="1.2" height="1.2" fill="#3a3a3a"/>
<rect x="375.60" y="180.70" width="1.2" height="1.2" fill="#3a3a3a"/>
<rect x="379.75" y="180.70" width="1.2" height="1.2" fill="#3a3a3a"/>
<path d="M367.6 199.8 l4.6 -8.6 l7.2 8.2z" fill="#fbfbe8" stroke="#c8c838" stroke-width="1"/><circle cx="367.6" cy="199.8" r="1" fill="#d8d830"/><circle cx="379.4" cy="199.4" r="1" fill="#d8d830"/><circle cx="372.2" cy="191.2" r="1" fill="#d8d830"/><path d="M372.6 192 l0.2 6 l1.6 -1.4 l1.2 2.4 l1 -0.5 l-1.2 -2.3 h2z" fill="#fff" stroke="#111" stroke-width="0.6"/>
<rect x="366" y="207.2" width="5" height="6" fill="#4858b8" stroke="#2c3890" stroke-width="0.4"/><path d="M367.2 207.2 v6 M369.6 207.2 v6 M366 210.2 h5" stroke="#a8b0e8" stroke-width="0.4"/><rect x="366" y="214.6" width="4.6" height="6" rx="1.2" fill="#38b838" stroke="#1e8a1e" stroke-width="0.4"/><path d="M371.8 210 l4.6 2.4 l-1.4 3 l-4.4 -2.6z" fill="#5868b0"/><path d="M375 212.4 l5 3.2 l-1.6 3.4 l-4.8 -3.4z" fill="#404c94"/><circle cx="377.4" cy="219.4" r="1.6" fill="#6a6a6a"/>
<path d="M366.2 226.4 l9.4 -1.2 v9.6 l-9.4 1.6z" fill="url(#rb)" stroke="#2a3a8a" stroke-width="0.4"/><path d="M375.8 225.2 v9.4" stroke="#555" stroke-width="0.8"/><path d="M376.4 235.8 v-3 M376.4 235.8 l-3.6 3.6 M376.4 235.8 l4.4 3" stroke="#8a8a8a" stroke-width="1.3" fill="none"/>
<rect x="366.2" y="244.4" width="11.4" height="10.6" fill="#f6f6f6" stroke="#8a8a8a" stroke-width="0.8"/><rect x="366.2" y="244.4" width="11.4" height="2.2" fill="#b4b4c4"/><path d="M374 249.6 l1.6 -2 l1.4 1.8 l2.6 -0.6 l-0.8 2.4 l2 1.6 l-2.2 1 l0.2 2.6 l-2.4 -1 l-1.8 1.8 l-0.8 -2.4 l-2.6 -0.4 l1.8 -1.8 l-1 -2.4z" fill="#f0e820" stroke="#b8b010" stroke-width="0.3"/><ellipse cx="375.6" cy="252.4" rx="2.6" ry="2" fill="#30b830"/><path d="M368 247.6 l3.4 2.6" stroke="#111" stroke-width="0.9"/><path d="M378.6 256 l2 1.8" stroke="#111" stroke-width="0.9"/>
<rect x="367.30" y="265.40" width="1.2" height="1.2" fill="#3a3a3a"/>
<rect x="371.45" y="265.40" width="1.2" height="1.2" fill="#3a3a3a"/>
<rect x="375.60" y="265.40" width="1.2" height="1.2" fill="#3a3a3a"/>
<rect x="379.75" y="265.40" width="1.2" height="1.2" fill="#3a3a3a"/>
<rect x="366" y="274.4" width="5.4" height="11.2" rx="2" fill="#5c5c5c" stroke="#3a3a3a" stroke-width="0.5"/><path d="M367.4 276.4 h2.6 M367.4 278.6 h2.6 M367.4 280.8 h2.6 M367.4 283 h2.6" stroke="#8a8a8a" stroke-width="0.6"/><path d="M371.8 282.4 q2.2 -0.6 3 -3.4" stroke="#e8a020" stroke-width="1.4" fill="none"/><path d="M374.8 279 q1.2 -3.6 6.2 -3.6" stroke="#3848d0" stroke-width="1.4" fill="none"/><path d="M373.2 281.2 q1 -1.2 1.6 -2.2" stroke="#e04020" stroke-width="1.4" fill="none"/>
<path d="M367.8 292.4 q3 -1.4 5.6 0.2 t5.4 0.6 v1.8 q-2.8 0.8 -5.4 -0.6 t-5.6 -0.2z" fill="#e83820"/>
<path d="M367.8 295.0 q3 -1.4 5.6 0.2 t5.4 0.6 v1.8 q-2.8 0.8 -5.4 -0.6 t-5.6 -0.2z" fill="#f0a020"/>
<path d="M367.8 297.6 q3 -1.4 5.6 0.2 t5.4 0.6 v1.8 q-2.8 0.8 -5.4 -0.6 t-5.6 -0.2z" fill="#38b838"/>
<path d="M367.8 300.2 q3 -1.4 5.6 0.2 t5.4 0.6 v1.8 q-2.8 0.8 -5.4 -0.6 t-5.6 -0.2z" fill="#28a8d0"/>
<path d="M367.8 302.8 q3 -1.4 5.6 0.2 t5.4 0.6 v1.8 q-2.8 0.8 -5.4 -0.6 t-5.6 -0.2z" fill="#2848c8"/>
<path d="M366 319.6 q-0.6 -5 5.6 -7.6 l5.2 -2.6 q4 -0.6 4 3.2 q0 2.6 -3 4.2 l-3.4 5.4 q-3 3 -6.4 1 q-2 -1.4 -2 -3.6z" fill="none" stroke="#28a890" stroke-width="1.5"/><circle cx="370.4" cy="319.6" r="3.1" fill="#c88020" stroke="#8a5810" stroke-width="0.3"/><circle cx="377.2" cy="313" r="1.9" fill="#4060c0"/>
<rect x="367.30" y="331.40" width="1.2" height="1.2" fill="#3a3a3a"/>
<rect x="371.45" y="331.40" width="1.2" height="1.2" fill="#3a3a3a"/>
<rect x="375.60" y="331.40" width="1.2" height="1.2" fill="#3a3a3a"/>
<rect x="379.75" y="331.40" width="1.2" height="1.2" fill="#3a3a3a"/>
<path d="M368.4 349.4 q6.6 2.6 11 -4.6 l1 1.6 q-4 8 -12.6 5z" fill="#555" stroke="#333" stroke-width="0.3"/><g fill="#e8b820"><circle cx="369.6" cy="342.2" r="0.8"/><circle cx="372" cy="341" r="0.8"/><circle cx="374.4" cy="342.6" r="0.8"/><circle cx="371" cy="344.4" r="0.8"/><circle cx="373.4" cy="345.6" r="0.8"/><circle cx="369.4" cy="346.4" r="0.7"/><circle cx="375.8" cy="344.8" r="0.7"/><circle cx="371.6" cy="347.4" r="0.7"/></g><path d="M368.8 340.4 l2.2 -0.8 M373 339.8 l1.6 0.8" stroke="#c89818" stroke-width="0.7"/>
<defs>
<linearGradient id="cf" x1="0" y1="0" x2="0" y2="1"><stop offset="0" stop-color="#c8f4f8"/><stop offset="1" stop-color="#2cb4c8"/></linearGradient>
<radialGradient id="gr" cx="0.4" cy="0.35" r="0.7"><stop offset="0" stop-color="#8cf060"/><stop offset="1" stop-color="#28a818"/></radialGradient>
<radialGradient id="bb" cx="0.4" cy="0.35" r="0.8"><stop offset="0" stop-color="#fff"/><stop offset="1" stop-color="#e8e8e8"/></radialGradient>
<linearGradient id="rb2" x1="0" y1="0" x2="1" y2="0"><stop offset="0" stop-color="#1828c8"/><stop offset="0.3" stop-color="#18b8e0"/><stop offset="0.55" stop-color="#38c838"/><stop offset="0.78" stop-color="#f0e020"/><stop offset="1" stop-color="#e88020"/></linearGradient>
<linearGradient id="cyl" x1="0" y1="0" x2="0.5" y2="1"><stop offset="0" stop-color="#f2f2f2"/><stop offset="0.5" stop-color="#bcbcbc"/><stop offset="1" stop-color="#868686"/></linearGradient>
<linearGradient id="bs" x1="0" y1="0" x2="1" y2="1"><stop offset="0" stop-color="#8cb4f0"/><stop offset="1" stop-color="#3c68c8"/></linearGradient>
</defs>
<rect x="366.90" y="513.20" width="1.2" height="1.2" fill="#3a3a3a"/>
<rect x="366.90" y="519.00" width="1.2" height="1.2" fill="#3a3a3a"/>
<rect x="366.90" y="524.80" width="1.2" height="1.2" fill="#3a3a3a"/>
<circle cx="380.6" cy="518.6" r="6.8" fill="url(#bb)" stroke="#e4dcc8" stroke-width="0.5"/>
<path d="M380.6 518.6 L380.6 511.8 A6.8 6.8 0 0 0 373.8 518.6z" fill="#f6cc50" opacity="0.9"/><path d="M380.6 518.6 L380.6 525.4 A6.8 6.8 0 0 0 387.40000000000003 518.6z" fill="#f2c040" opacity="0.9"/>
<circle cx="379.0" cy="516.8000000000001" r="3.4" fill="#fff" opacity="0.45"/>
<path d="M391.4 518.8 h3.6 l-1.8 2z" fill="#111"/>
<rect x="402.20" y="513.20" width="1.2" height="1.2" fill="#3a3a3a"/>
<rect x="402.20" y="519.00" width="1.2" height="1.2" fill="#3a3a3a"/>
<rect x="402.20" y="524.80" width="1.2" height="1.2" fill="#3a3a3a"/>
<circle cx="434.8" cy="519.2" r="7.2" fill="url(#gr)" stroke="#1c8a10" stroke-width="0.6"/><text x="429.9" y="521.2" font-size="5.2" font-weight="bold" fill="#186010" textLength="9.8" lengthAdjust="spacingAndGlyphs">RUN</text>
<rect x="444.2" y="510.6" width="18" height="17.2" fill="#fafafa"/><path d="M444.2 527.8000000000001 v-17.2 h18" fill="none" stroke="#7c7c7c" stroke-width="1.4"/><path d="M445.4 527.8000000000001 v-16.0 h16.8" fill="none" stroke="#b0b0b0" stroke-width="0.8"/>
<path d="M450.4 513.4 v10.2 l2.5 -2.2 l1.7 3.8 l1.5 -0.7 l-1.7 -3.7 h3.2z" fill="#fff" stroke="#111" stroke-width="0.8"/>
<rect x="468.00" y="513.20" width="1.2" height="1.2" fill="#3a3a3a"/>
<rect x="468.00" y="519.00" width="1.2" height="1.2" fill="#3a3a3a"/>
<rect x="468.00" y="524.80" width="1.2" height="1.2" fill="#3a3a3a"/>
<path d="M475.4 520 l2.2 -1.8 l3.2 3.4 q3.4 -5.4 7.6 -7.4 l1 1.6 q-4.6 3.6 -7.8 10 h-1.4z" fill="#b0bc3c" stroke="#909c28" stroke-width="0.4"/>
<rect x="497.00" y="513.20" width="1.2" height="1.2" fill="#3a3a3a"/>
<rect x="497.00" y="519.00" width="1.2" height="1.2" fill="#3a3a3a"/>
<rect x="497.00" y="524.80" width="1.2" height="1.2" fill="#3a3a3a"/>
<path d="M503.4 525.4 v-10.4 q0 -0.9 0.9 -0.9 h4.4 l0.9 1.2 h7 q0.9 0 0.9 0.9 v9.2z" fill="url(#cf)" stroke="#1c7890" stroke-width="0.8"/><path d="M503.8 516.2 h13.4" stroke="#e8fcff" stroke-width="0.6"/>
<circle cx="507" cy="522.2" r="2.4" fill="#f0e020" stroke="#111" stroke-width="0.5"/><path d="M507 522.2 v-2.4 a2.4 2.4 0 0 1 2.4 2.4z M507 522.2 v2.4 a2.4 2.4 0 0 1 -2.4 -2.4z" fill="#111"/><path d="M509 520.6 l4.4 -2.4" stroke="#2050c0" stroke-width="0.9"/><circle cx="511" cy="519.4" r="1.4" fill="#2858d0"/><circle cx="514.2" cy="518.4" r="1.6" fill="#38b838"/>
<path d="M522.4 525.4 v-10.4 q0 -0.9 0.9 -0.9 h4.4 l0.9 1.2 h7 q0.9 0 0.9 0.9 v9.2z" fill="url(#cf)" stroke="#1c7890" stroke-width="0.8"/><path d="M522.8 516.2 h13.4" stroke="#e8fcff" stroke-width="0.6"/>
<path d="M526 523.6 l3.4 -6 l3.4 6z" fill="#f0d020" stroke="#c89810" stroke-width="0.6"/>
<path d="M541.4 525.4 v-10.4 q0 -0.9 0.9 -0.9 h4.4 l0.9 1.2 h7 q0.9 0 0.9 0.9 v9.2z" fill="url(#cf)" stroke="#1c7890" stroke-width="0.8"/><path d="M541.8 516.2 h13.4" stroke="#e8fcff" stroke-width="0.6"/>
<text x="543" y="524.2" font-size="8.6" font-weight="bold" fill="#144850" textLength="11.2" lengthAdjust="spacingAndGlyphs">CS</text>
<rect x="562.90" y="513.20" width="1.2" height="1.2" fill="#3a3a3a"/>
<rect x="562.90" y="519.00" width="1.2" height="1.2" fill="#3a3a3a"/>
<rect x="562.90" y="524.80" width="1.2" height="1.2" fill="#3a3a3a"/>
<circle cx="577" cy="519.6" r="4.9" fill="#f0f018" stroke="#5c5c10" stroke-width="0.8"/>
<circle cx="595.6" cy="519.6" r="5.9" fill="#f4ec18" stroke="#111" stroke-width="0.8"/><path d="M595.6 519.6 v-5.9 a5.9 5.9 0 0 1 5.9 5.9z M595.6 519.6 v5.9 a5.9 5.9 0 0 1 -5.9 -5.9z" fill="#111"/>
<path d="M607.6 525 l6.4 -6.6 l-1.6 -1.6 l7.6 -3 l-3 7.6 l-1.6 -1.6 l-6.4 6.6z" fill="#f0e818" stroke="#4c4c10" stroke-width="0.7"/>
<path d="M633 520.4 v-6.4 M633 520.4 l-6.4 3.6 M633 520.4 l6.2 3.4" stroke="#c8c828" stroke-width="1.7" stroke-linecap="round" fill="none"/>
<path d="M651.4 513.2 v13 M645.4 519.6 h12" stroke="#8a8a8a" stroke-width="0.9"/><path d="M645.6 524.2 q4 -0.6 5.8 -4.6 q1.8 -4.2 5.8 -4.6" stroke="#e03030" stroke-width="1.1" fill="none"/>
<path d="M664.6 516.6 l3 -4.6 h9.8 l-3 4.6z" fill="#a8e8a8" stroke="#78c878" stroke-width="0.3"/><path d="M663.4 521.6 q3 -4.4 6.6 -2 q3.6 2 7.4 -2.4 l-0.4 3 q-3.6 3.6 -7 1.4 q-3.4 -1.8 -6.2 1.8z" fill="#5878c8" stroke="#3c58a8" stroke-width="0.3"/><path d="M663.6 526.4 l3 -3.6 h10.4 l-3 3.6z" fill="#f0a0a0" stroke="#e07070" stroke-width="0.3"/><path d="M663.4 516.4 v10" stroke="#8890c8" stroke-width="0.5"/>
<path d="M683 516 l4.6 -3.6 l4.6 2.6 l-4.6 3.4z" fill="#30c030"/><path d="M683 516 v3.4 l4.6 3 v-3.4z" fill="#188a18"/><path d="M692.2 515 l3.8 5.8 l-2.8 3.6 l-3.4 -4.6 z" fill="#d82020"/><path d="M690 519.8 l3.2 4.6 l-1.2 0.4 l-3.6 -4z" fill="#901010"/><path d="M683 519.4 l4.6 3 l4 -1.4 l1.4 3.4 l-5 2 l-5 -3z" fill="#4858c8"/><path d="M685 521.6 l3 1.6 l2.6 -1 v1.6 l-2.8 1.2 l-2.8 -1.6z" fill="#d8dcf8"/>
<path d="M701.4 517 q6 -0.4 11.2 -4.2 v9.6 q-5 3.6 -11.2 4z" fill="url(#bs)" stroke="#3454a8" stroke-width="0.5"/>
<path d="M725.6 513.6 v12.6" stroke="#38a838" stroke-width="1"/><path d="M719.6 519.8 h13.2" stroke="#e8a020" stroke-width="0.9"/><path d="M720.4 523 q4 -0.2 5.6 -3.6 q1.6 -3.6 6.4 -4" stroke="#d028c8" stroke-width="0.9" fill="none"/><path d="M721.6 524.6 l8.2 -9.4" stroke="#2848d0" stroke-width="0.8"/>
<path d="M740 517.4 q5.4 -0.2 10.8 -4.2 v8.4 q-5 3.4 -10.8 4.2z" fill="url(#rb2)" stroke="#2c3c9c" stroke-width="0.4"/>
<rect x="759.40" y="513.20" width="1.2" height="1.2" fill="#3a3a3a"/>
<rect x="759.40" y="519.00" width="1.2" height="1.2" fill="#3a3a3a"/>
<rect x="759.40" y="524.80" width="1.2" height="1.2" fill="#3a3a3a"/>
<rect x="764.2" y="510.6" width="17.8" height="17.2" fill="#fafafa"/><path d="M764.2 527.8000000000001 v-17.2 h17.8" fill="none" stroke="#7c7c7c" stroke-width="1.4"/><path d="M765.4000000000001 527.8000000000001 v-16.0 h16.6" fill="none" stroke="#b0b0b0" stroke-width="0.8"/>
<path d="M766.8 523 l4.4 -5.8 l2.6 -1.2 l1.4 0.8 h4.2 q0.8 0 0.8 0.8 v4 q0 0.8 -0.8 0.8 h-5.2 l-1.6 -1 l-3 2.6 q-1.2 0.6 -2.8 -1z" fill="#9c9c9c" stroke="#6a6a6a" stroke-width="0.5"/><path d="M771.6 518 l3 -1.4 l1.2 0.7 l-2.8 1.6z" fill="#dcdcdc"/><rect x="775" y="518" width="4.2" height="1.4" fill="#c8c8c8"/>
<path d="M785.4 512.2 h6.6 M785.4 526.2 h6.6 M788.7 512.2 v14" stroke="#1a1a1a" stroke-width="1.1" fill="none"/><path d="M787.2 515 l1.5 -2 l1.5 2 M787.2 523.4 l1.5 2 l1.5 -2" stroke="#1a1a1a" stroke-width="0.7" fill="none"/><path d="M791.6 519.6 q1.8 -5 3.8 -0.4 q1.6 3.6 4.2 -0.6" stroke="#e02838" stroke-width="1.1" fill="none"/>
<rect x="809.6" y="512" width="3" height="14.4" rx="1" fill="#1a1a1a"/><rect x="811.6" y="513.4" width="6.4" height="2.8" rx="1" fill="#f4f4f4" stroke="#222" stroke-width="0.7"/><rect x="803.4" y="520.6" width="7" height="2.6" rx="1" fill="#f4f4f4" stroke="#222" stroke-width="0.7"/>
<polygon points="835.90,519.60 834.51,521.08 834.98,523.05 833.03,523.63 832.45,525.58 830.48,525.11 829.00,526.50 827.52,525.11 825.55,525.58 824.97,523.63 823.02,523.05 823.49,521.08 822.10,519.60 823.49,518.12 823.02,516.15 824.97,515.57 825.55,513.62 827.52,514.09 829.00,512.70 830.48,514.09 832.45,513.62 833.03,515.57 834.98,516.15 834.51,518.12" fill="#dcdcdc" stroke="#9c9c9c" stroke-width="0.6"/><circle cx="829" cy="519.6" r="4.4" fill="#e8e8e8" stroke="#c0c0c0" stroke-width="0.4"/><circle cx="829" cy="519.6" r="1.7" fill="#9a9a9a"/><circle cx="826.8" cy="519.6" r="0.8" fill="#b8b8b8"/><circle cx="831.2" cy="519.6" r="0.8" fill="#b8b8b8"/>
<circle cx="848.6" cy="520.2" r="6" fill="#f0f0f0" stroke="#222" stroke-width="1"/><circle cx="848.4" cy="519.8" r="3.2" fill="#54548c"/><path d="M845.4 515.4 l2 3.4" stroke="#54548c" stroke-width="1.6"/><path d="M847.4 511.6 h2.4 v2.8 h1.2 l-2.4 2.4 l-2.4 -2.4 h1.2z" fill="#a8d018" stroke="#6c8c10" stroke-width="0.3"/>
<text x="860" y="524.4" font-size="12.6" fill="#111" textLength="13.8" lengthAdjust="spacingAndGlyphs">f=0</text>
<rect x="881.70" y="513.20" width="1.2" height="1.2" fill="#3a3a3a"/>
<rect x="881.70" y="519.00" width="1.2" height="1.2" fill="#3a3a3a"/>
<rect x="881.70" y="524.80" width="1.2" height="1.2" fill="#3a3a3a"/>
<path d="M888.2 518.1 h9 v-1.8 l4 2.8 l-4 2.8 v-1.8 h-9z" fill="#c81018"/><rect x="901.8" y="512.8" width="1.1" height="13.2" fill="#111"/>
<path d="M907.6 525.6 v-6 q6.6 -5 13.2 0 v6 q-6.6 -3.4 -13.2 0z" fill="url(#rb2)"/><path d="M907.6 517.2 v-3.6 h13.2 v3.6 M911 513.6 v2.4 M914.2 513.6 v2.4 M917.4 513.6 v2.4" stroke="#e02020" stroke-width="0.9" fill="none"/>
<g transform="rotate(-28 932.6 519.6)"><rect x="926" y="515.4" width="12.6" height="8.4" rx="3" fill="url(#cyl)" stroke="#7a7a7a" stroke-width="0.4"/><ellipse cx="927.8" cy="519.6" rx="2" ry="4" fill="#9a9a9a" stroke="#666" stroke-width="0.5"/><ellipse cx="927.8" cy="519.6" rx="1" ry="2.4" fill="#c4c4c4"/></g>
<g transform="rotate(-28 951.2 519.6)"><rect x="944.4" y="515.6" width="13.6" height="8" rx="4" fill="#98a8ec" stroke="#4858c8" stroke-width="0.9"/><ellipse cx="952" cy="519.6" rx="4.6" ry="3.2" fill="#38c838"/><ellipse cx="952.6" cy="519.8" rx="2.4" ry="2" fill="#e87820"/><ellipse cx="946" cy="519.6" rx="1.4" ry="3.4" fill="#c4ccf8" stroke="#4858c8" stroke-width="0.5"/></g>
<path d="M964.4 512.4 h5 l-5 2 l5 2 l-5 2 l5 2 l-5 2 l5 2 l-5 2 h5" stroke="#188a28" stroke-width="1.3" fill="none"/><rect x="972.6" y="513" width="4.6" height="7.6" rx="2" fill="#f4f098" stroke="#333" stroke-width="0.7"/><rect x="973.6" y="520.6" width="2.6" height="5" fill="#f4f098" stroke="#333" stroke-width="0.6"/><path d="M974.9 511.6 v1.4" stroke="#333" stroke-width="0.8"/>
<path d="M983.2 519.4 l7.6 -5.4 l4.4 1.6 l-7.6 5.4z" fill="#a0a0d4"/><path d="M985.4000000000001 521 l7.6 -5.2 v3.6 l-7.6 5.2z" fill="#7c7cb8"/><path d="M983.2 523.2 l7.6 -5 l4.4 1.4 l-7.6 5.6z" fill="#a0a0d4"/><path d="M983.2 519.4 l4.4 1.6 v1.2 l-4.4 -1.4z M983.2 523.2 l4.4 2 v1.2 l-4.4 -1.8z" fill="#6868a8"/>
<path d="M1002 519.4 l7.6 -5.4 l4.4 1.6 l-7.6 5.4z" fill="#38c4d8"/><path d="M1004.2 521 l7.6 -5.2 v3.6 l-7.6 5.2z" fill="#1c9cb4"/><path d="M1002 523.2 l7.6 -5 l4.4 1.4 l-7.6 5.6z" fill="#38c4d8"/><path d="M1002 519.4 l4.4 1.6 v1.2 l-4.4 -1.4z M1002 523.2 l4.4 2 v1.2 l-4.4 -1.8z" fill="#14849c"/>
<polygon points="1033.20,519.60 1030.59,520.90 1031.94,523.48 1029.07,523.00 1028.64,525.88 1026.60,523.80 1024.56,525.88 1024.13,523.00 1021.26,523.48 1022.61,520.90 1020.00,519.60 1022.61,518.30 1021.26,515.72 1024.13,516.20 1024.56,513.32 1026.60,515.40 1028.64,513.32 1029.07,516.20 1031.94,515.72 1030.59,518.30" fill="#f0ec20" stroke="#c8c010" stroke-width="0.3"/><circle cx="1024.8" cy="518" r="2.3" fill="#30b830"/><circle cx="1028" cy="521.2" r="2.3" fill="#30b830"/><path d="M1019.2 512.2 l3.6 3.6 M1034.2 526.6 l-3.8 -3.8" stroke="#111" stroke-width="0.8"/><path d="M1023.2 516.2 l-2 -0.4 l1.6 -1.6z M1030 522.4 l2 0.4 l-1.6 1.6z" fill="#111"/>
<rect x="1040.70" y="513.20" width="1.2" height="1.2" fill="#3a3a3a"/>
<rect x="1040.70" y="519.00" width="1.2" height="1.2" fill="#3a3a3a"/>
<rect x="1040.70" y="524.80" width="1.2" height="1.2" fill="#3a3a3a"/>
<text x="1049.4" y="523.6" font-size="13" font-style="italic" fill="#8a8a8a" class="sf" textLength="11" lengthAdjust="spacingAndGlyphs">x</text>
<text x="1065.6" y="523.4" font-size="8.4" fill="#555" textLength="15.6" lengthAdjust="spacingAndGlyphs">[A₁A₂]</text>
<text x="1085" y="522.4" font-size="8" fill="#6a6a6a" textLength="14.4" lengthAdjust="spacingAndGlyphs">'abc'</text>
<text x="1108.4" y="518.6" font-size="6.6" font-style="italic" fill="#777" textLength="4.4" lengthAdjust="spacingAndGlyphs">∂</text><rect x="1106.4" y="519.4" width="8.4" height="0.7" fill="#777"/><text x="1106.8" y="525.8" font-size="6.6" font-style="italic" fill="#777" textLength="7.6" lengthAdjust="spacingAndGlyphs">∂t</text>
<rect x="1122" y="515.8" width="7.4" height="7.6" fill="#20d020" stroke="#18a818" stroke-width="0.4"/><path d="M1129.4 519 h4 v-2.4 l3.8 3 l-3.8 3 v-2.4 h-4z" fill="#d81818"/>
<rect x="1142.6" y="514.2" width="11.6" height="4.4" rx="2.2" fill="#f0d818" stroke="#222" stroke-width="0.8"/><rect x="1145.6" y="515" width="5.6" height="2.6" rx="1.3" fill="#e83018"/><path d="M1142 518 v5.6 h4.4 M1155 518 v5.6 h-5 M1147.8 521.8 v3.8 M1147.8 523.6 h2.4" stroke="#111" stroke-width="0.9" fill="none"/>
<rect x="1165.2" y="513" width="3.4" height="13.4" fill="#7c7cac" stroke="#44447c" stroke-width="0.5"/>
<path d="M1159.4 514.5 h2.4 v-1.3 l2.8 2 l-2.8 2 v-1.3 h-2.4z" fill="#d81818"/>
<path d="M1159.4 518.9 h2.4 v-1.3 l2.8 2 l-2.8 2 v-1.3 h-2.4z" fill="#d81818"/>
<path d="M1159.4 523.3 h2.4 v-1.3 l2.8 2 l-2.8 2 v-1.3 h-2.4z" fill="#d81818"/>
<path d="M1168.8 519 h2 v-1.4 l2.8 2 l-2.8 2 v-1.4 h-2z" fill="#28a028"/>
<text x="1178" y="522" font-size="9.6" font-weight="bold" fill="#2848a8" textLength="15" lengthAdjust="spacingAndGlyphs">fmu</text><path d="M1179 523.4 h13.4" stroke="#e88030" stroke-width="0.8"/>
<rect x="366.90" y="536.10" width="1.2" height="1.2" fill="#3a3a3a"/>
<rect x="366.90" y="542.30" width="1.2" height="1.2" fill="#3a3a3a"/>
<rect x="366.90" y="548.50" width="1.2" height="1.2" fill="#3a3a3a"/>
<path d="M373 540.6 l1.2 -3.4 l1.4 4.4 l1.4 -5 l1.4 5.4 l1.4 -4.4 l1.4 4 l1.4 -5 l1.4 5 l1.4 -4 l1.2 3.4" stroke="#28983c" stroke-width="0.9" fill="none"/><path d="M373 547 l1.2 -3 l1.4 4.6 l1.4 -5 l1.4 5 l1.4 -4 l1.4 3.6 l1.4 -4.6 l1.4 5 l1.4 -4.4 l1.2 3" stroke="#3858d0" stroke-width="0.9" fill="none"/>
<rect x="392.2" y="536" width="10" height="8" fill="#fff" stroke="#111" stroke-width="0.9"/><rect x="392.2" y="536" width="10" height="2.2" fill="#789838"/><path d="M392.2 540.8 h10 M395.6 536 v8 M399 536 v8" stroke="#111" stroke-width="0.7"/><path d="M397 540.6 h7.6 l2.2 2.2 v6.6 h-9.8z" fill="#fff" stroke="#111" stroke-width="0.8"/><circle cx="401" cy="545.4" r="2.3" fill="#fff" stroke="#111" stroke-width="0.9"/><path d="M402.6 547 l2.2 2.2" stroke="#111" stroke-width="1.1"/>
<text x="411.6" y="548" font-size="13.5" fill="#555" textLength="13.4" lengthAdjust="spacingAndGlyphs">{ }</text>
<rect x="429.4" y="536.2" width="14.4" height="13.4" fill="#f4f4ec" stroke="#222" stroke-width="0.9"/><rect x="429.4" y="536.2" width="14.4" height="2.6" fill="#789838"/><path d="M429.4 538.8 h14.4 M429.4 541.5 h14.4 M429.4 544.2 h14.4 M429.4 546.9 h14.4 M434.2 536.2 v13.4 M439 536.2 v13.4" stroke="#222" stroke-width="0.8"/>
<rect x="363" y="564.4" width="16.2" height="15.6" fill="#f0f0f0"/><path d="M363 580.0 v-15.6 h16.2" fill="none" stroke="#fff" stroke-width="1"/><path d="M363 580.0 h16.2 v-15.6" fill="none" stroke="#6c6c6c" stroke-width="1.3"/>
<rect x="380.2" y="564.4" width="17" height="15.6" fill="#f0f0f0"/><path d="M380.2 580.0 v-15.6 h17" fill="none" stroke="#fff" stroke-width="1"/><path d="M380.2 580.0 h17 v-15.6" fill="none" stroke="#6c6c6c" stroke-width="1.3"/>
<path d="M366.2 572.2 l5.2 -4.8 v3.1 h6 v3.4 h-6 v3.1z" fill="#6c88c4" stroke="#4c64a4" stroke-width="0.5"/><path d="M367.6 572 l3.4 -3 v1.8" stroke="#a8c4f0" stroke-width="0.7" fill="none"/>
<path d="M394 572.2 l-5.4 -5 v3 h-5 v4 h5 v3z" fill="#f4f6fa" stroke="#a8b8d4" stroke-width="0.8" stroke-dasharray="1.4 0.8"/>
<path d="M365.4 582 h3.8 M365.4 591.4 h3.8 M367.3 582 v9.4" stroke="#1a1a1a" stroke-width="0.9" fill="none"/><path d="M369.4 587 q1.4 -3.6 3 -0.4 q1.4 2.8 3.4 -0.4" stroke="#e02838" stroke-width="1" fill="none"/>
<rect x="363" y="593" width="13.6" height="12.6" fill="#f0f0f0"/><path d="M363 605.6 v-12.6 h13.6" fill="none" stroke="#fff" stroke-width="1"/><path d="M363 605.6 h13.6 v-12.6" fill="none" stroke="#6c6c6c" stroke-width="1.3"/>
<rect x="365" y="595.2" width="10.4" height="8.4" fill="#e8e020" stroke="#55550c" stroke-width="0.8"/><path d="M365 598 h10.4" stroke="#55550c" stroke-width="0.9"/><rect x="367" y="600" width="2" height="1.8" fill="#fff" stroke="#55550c" stroke-width="0.5"/><rect x="371.2" y="600" width="2" height="1.8" fill="#fff" stroke="#55550c" stroke-width="0.5"/>
<rect x="363" y="607" width="14" height="13.6" fill="#f0f0f0"/><path d="M363 620.6 v-13.6 h14" fill="none" stroke="#fff" stroke-width="1"/><path d="M363 620.6 h14 v-13.6" fill="none" stroke="#6c6c6c" stroke-width="1.3"/>
<rect x="365.4" y="609.4" width="9.4" height="9.6" fill="#c8c8c8" stroke="#8a8a8a" stroke-width="0.5"/><path d="M370 609.4 v9.6 M365.4 614.2 h9.4" stroke="#a0a0a0" stroke-width="0.5"/><path d="M366.2 612.8 q2.2 -2 4.4 0 v4.6 h-4.4z" fill="#f09018"/><path d="M370.4 614 h2 v2.4 h-2" fill="#f09018"/>
<rect x="574.2" y="565.8" width="13" height="13.4" fill="#f0f0f0"/><path d="M574.2 579.1999999999999 v-13.4 h13" fill="none" stroke="#fff" stroke-width="1"/><path d="M574.2 579.1999999999999 h13 v-13.4" fill="none" stroke="#6c6c6c" stroke-width="1.3"/>
<rect x="588" y="565.8" width="14" height="13.4" fill="#f0f0f0"/><path d="M588 579.1999999999999 v-13.4 h14" fill="none" stroke="#fff" stroke-width="1"/><path d="M588 579.1999999999999 h14 v-13.4" fill="none" stroke="#6c6c6c" stroke-width="1.3"/>
<rect x="602.8" y="565.8" width="14.8" height="13.4" fill="#f0f0f0"/><path d="M602.8 579.1999999999999 v-13.4 h14.8" fill="none" stroke="#fff" stroke-width="1"/><path d="M602.8 579.1999999999999 h14.8 v-13.4" fill="none" stroke="#6c6c6c" stroke-width="1.3"/>
<path d="M578 569.6 q1.6 0.4 2.6 2.6 q1 -2.2 2.8 -2.8 M578 575.4 q1.8 -0.4 2.6 -2.8 q1 2.4 2.8 3" stroke="#c43c50" stroke-width="1.1" fill="none"/>
<path d="M591.6 572.4 q1.6 0.8 2.4 3.2 q1.6 -4.2 4.6 -6.6" stroke="#48a848" stroke-width="1.1" fill="none"/>
<text x="604.6" y="576" font-size="8" font-style="italic" fill="#111" class="sf" textLength="11" lengthAdjust="spacingAndGlyphs">f(x)</text><path d="M605 577 l3.4 -7" stroke="#111" stroke-width="0.6"/>
<path d="M535.5 607.7 h5.8 l-2.9 3.2z" fill="#111"/>

<defs><linearGradient id="fg" x1="0" y1="0" x2="0" y2="1"><stop offset="0" stop-color="#fbd873"/><stop offset="1" stop-color="#f2b844"/></linearGradient><linearGradient id="fg2" x1="0" y1="0" x2="1" y2="1"><stop offset="0" stop-color="#f6d77a"/><stop offset="1" stop-color="#dca935"/></linearGradient><linearGradient id="mg" x1="0" y1="0" x2="1" y2="1"><stop offset="0" stop-color="#6fe4ee"/><stop offset="1" stop-color="#12a8c0"/></linearGradient></defs><line x1="22.6" y1="106.44" x2="22.6" y2="435.87" stroke="#4a4f66" stroke-width="0.9" stroke-dasharray="0.95 0.95"/><line x1="35.4" y1="164.28" x2="35.4" y2="328.52" stroke="#777" stroke-width="0.8" stroke-dasharray="1.1 1.2"/><line x1="35.4" y1="363.63" x2="35.4" y2="389.87" stroke="#777" stroke-width="0.8" stroke-dasharray="1.1 1.2"/>
<rect x="6.60" y="95.10" width="6.8" height="6.8" fill="#fbfbfb" stroke="#9a9ea6" stroke-width="0.8"/><rect x="8.00" y="98.05" width="4" height="0.9" fill="#2a3350"/>
<rect x="17.30" y="94.20" width="10.4" height="8.4" fill="url(#mg)" stroke="#1a8a9a" stroke-width="0.5"/><rect x="17.30" y="94.20" width="4" height="1.4" fill="#bff"/><circle cx="22.50" cy="98.80" r="2.5" fill="#ffe020" stroke="#111" stroke-width="0.5"/><path d="M22.50 98.80 v-2.5 a2.5 2.5 0 0 1 2.5 2.5z M22.50 98.80 v2.5 a2.5 2.5 0 0 1 -2.5 -2.5z" fill="#111"/>
<path d="M33.9 95.80 v-1 a1.5 1.5 0 0 1 3 0 v1" fill="none" stroke="#b8c8b8" stroke-width="0.8"/><rect x="33.2" y="95.50" width="4.5" height="4.2" rx="0.8" fill="#18a040"/>
<line x1="26.4" y1="113.84" x2="29.5" y2="113.84" stroke="#8a8a8a" stroke-width="0.8" stroke-dasharray="1 1"/>
<rect x="19.20" y="110.44" width="6.8" height="6.8" fill="#fbfbfb" stroke="#9a9ea6" stroke-width="0.8"/><rect x="20.60" y="113.39" width="4" height="0.9" fill="#2a3350"/><rect x="22.15" y="111.84" width="0.9" height="4" fill="#2a3350"/>
<path d="M30.20 110.64 q0 -1 1 -1 h2.6 l0.9 1 h4 q0.7 0 0.7 0.8 v5.4 q0 0.8 -0.8 0.8 h-7.6 q-0.8 0 -0.8 -0.8z" fill="url(#fg)" stroke="#e0a63a" stroke-width="0.5"/><rect x="30.70" y="111.54" width="8" height="0.7" fill="#fde9a8" opacity="0.9"/>
<line x1="26.4" y1="129.17" x2="29.5" y2="129.17" stroke="#8a8a8a" stroke-width="0.8" stroke-dasharray="1 1"/>
<rect x="19.20" y="125.77" width="6.8" height="6.8" fill="#fbfbfb" stroke="#9a9ea6" stroke-width="0.8"/><rect x="20.60" y="128.72" width="4" height="0.9" fill="#2a3350"/><rect x="22.15" y="127.17" width="0.9" height="4" fill="#2a3350"/>
<path d="M30.20 125.97 q0 -1 1 -1 h2.6 l0.9 1 h4 q0.7 0 0.7 0.8 v5.4 q0 0.8 -0.8 0.8 h-7.6 q-0.8 0 -0.8 -0.8z" fill="url(#fg)" stroke="#e0a63a" stroke-width="0.5"/><rect x="30.70" y="126.87" width="8" height="0.7" fill="#fde9a8" opacity="0.9"/>
<line x1="26.4" y1="144.50" x2="29.5" y2="144.50" stroke="#8a8a8a" stroke-width="0.8" stroke-dasharray="1 1"/>
<rect x="19.20" y="141.10" width="6.8" height="6.8" fill="#fbfbfb" stroke="#9a9ea6" stroke-width="0.8"/><rect x="20.60" y="144.06" width="4" height="0.9" fill="#2a3350"/><rect x="22.15" y="142.50" width="0.9" height="4" fill="#2a3350"/>
<path d="M30.20 141.31 q0 -1 1 -1 h2.6 l0.9 1 h4 q0.7 0 0.7 0.8 v5.4 q0 0.8 -0.8 0.8 h-7.6 q-0.8 0 -0.8 -0.8z" fill="url(#fg)" stroke="#e0a63a" stroke-width="0.5"/><rect x="30.70" y="142.20" width="8" height="0.7" fill="#fde9a8" opacity="0.9"/>
<line x1="26.4" y1="159.84" x2="29.5" y2="159.84" stroke="#8a8a8a" stroke-width="0.8" stroke-dasharray="1 1"/>
<rect x="19.20" y="156.44" width="6.8" height="6.8" fill="#fbfbfb" stroke="#9a9ea6" stroke-width="0.8"/><rect x="20.60" y="159.39" width="4" height="0.9" fill="#2a3350"/>
<path d="M30.10 163.14 v-5.6 q0 -0.8 0.8 -0.8 h2.2 l0.8 0.9 h3.4 v1.4" fill="#c9982c" stroke="#b98a22" stroke-width="0.4"/><path d="M30.20 163.24 l2.3 -4.3 h6.3 l-2.6 4.3z" fill="url(#fg2)" stroke="#c9982c" stroke-width="0.4"/>
<line x1="35.4" y1="175.18" x2="41" y2="175.18" stroke="#8a8a8a" stroke-width="0.8" stroke-dasharray="1 1.2"/>
<path d="M47.00 173.68 L45.40 174.28 L42.30 176.88 L42.10 178.18 L43.50 178.97 L47.20 176.68z" fill="#8e8e8e" stroke="#666" stroke-width="0.45"/><path d="M43.20 177.58 L46.60 175.18" stroke="#dadada" stroke-width="0.8"/><rect x="46.90" y="171.78" width="6" height="5.9" rx="0.7" fill="#8a8a8a" stroke="#5c5c5c" stroke-width="0.5"/><rect x="47.20" y="171.47" width="3" height="1" fill="#6e6e6e"/><rect x="47.50" y="173.28" width="1.8" height="2.1" fill="#f0f0f0" opacity="0.9"/><rect x="50.10" y="173.28" width="2" height="2.1" fill="#dedede" opacity="0.9"/>
<line x1="35.4" y1="190.51" x2="41" y2="190.51" stroke="#8a8a8a" stroke-width="0.8" stroke-dasharray="1 1.2"/>
<path d="M47.00 189.01 L45.40 189.61 L42.30 192.21 L42.10 193.51 L43.50 194.31 L47.20 192.01z" fill="#8e8e8e" stroke="#666" stroke-width="0.45"/><path d="M43.20 192.91 L46.60 190.51" stroke="#dadada" stroke-width="0.8"/><rect x="46.90" y="187.11" width="6" height="5.9" rx="0.7" fill="#8a8a8a" stroke="#5c5c5c" stroke-width="0.5"/><rect x="47.20" y="186.81" width="3" height="1" fill="#6e6e6e"/><rect x="47.50" y="188.61" width="1.8" height="2.1" fill="#f0f0f0" opacity="0.9"/><rect x="50.10" y="188.61" width="2" height="2.1" fill="#dedede" opacity="0.9"/>
<line x1="35.4" y1="205.84" x2="41" y2="205.84" stroke="#8a8a8a" stroke-width="0.8" stroke-dasharray="1 1.2"/>
<path d="M47.00 204.34 L45.40 204.94 L42.30 207.54 L42.10 208.84 L43.50 209.64 L47.20 207.34z" fill="#8e8e8e" stroke="#666" stroke-width="0.45"/><path d="M43.20 208.25 L46.60 205.84" stroke="#dadada" stroke-width="0.8"/><rect x="46.90" y="202.44" width="6" height="5.9" rx="0.7" fill="#8a8a8a" stroke="#5c5c5c" stroke-width="0.5"/><rect x="47.20" y="202.14" width="3" height="1" fill="#6e6e6e"/><rect x="47.50" y="203.94" width="1.8" height="2.1" fill="#f0f0f0" opacity="0.9"/><rect x="50.10" y="203.94" width="2" height="2.1" fill="#dedede" opacity="0.9"/>
<line x1="35.4" y1="221.18" x2="41" y2="221.18" stroke="#8a8a8a" stroke-width="0.8" stroke-dasharray="1 1.2"/>
<path d="M47.00 219.68 L45.40 220.28 L42.30 222.88 L42.10 224.18 L43.50 224.98 L47.20 222.68z" fill="#8e8e8e" stroke="#666" stroke-width="0.45"/><path d="M43.20 223.58 L46.60 221.18" stroke="#dadada" stroke-width="0.8"/><rect x="46.90" y="217.78" width="6" height="5.9" rx="0.7" fill="#8a8a8a" stroke="#5c5c5c" stroke-width="0.5"/><rect x="47.20" y="217.48" width="3" height="1" fill="#6e6e6e"/><rect x="47.50" y="219.28" width="1.8" height="2.1" fill="#f0f0f0" opacity="0.9"/><rect x="50.10" y="219.28" width="2" height="2.1" fill="#dedede" opacity="0.9"/>
<line x1="35.4" y1="236.52" x2="41" y2="236.52" stroke="#8a8a8a" stroke-width="0.8" stroke-dasharray="1 1.2"/>
<path d="M47.00 235.02 L45.40 235.62 L42.30 238.22 L42.10 239.52 L43.50 240.31 L47.20 238.02z" fill="#8e8e8e" stroke="#666" stroke-width="0.45"/><path d="M43.20 238.92 L46.60 236.52" stroke="#dadada" stroke-width="0.8"/><rect x="46.90" y="233.12" width="6" height="5.9" rx="0.7" fill="#8a8a8a" stroke="#5c5c5c" stroke-width="0.5"/><rect x="47.20" y="232.81" width="3" height="1" fill="#6e6e6e"/><rect x="47.50" y="234.62" width="1.8" height="2.1" fill="#f0f0f0" opacity="0.9"/><rect x="50.10" y="234.62" width="2" height="2.1" fill="#dedede" opacity="0.9"/>
<line x1="35.4" y1="251.85" x2="41" y2="251.85" stroke="#8a8a8a" stroke-width="0.8" stroke-dasharray="1 1.2"/>
<path d="M47.00 250.35 L45.40 250.95 L42.30 253.55 L42.10 254.85 L43.50 255.65 L47.20 253.35z" fill="#8e8e8e" stroke="#666" stroke-width="0.45"/><path d="M43.20 254.25 L46.60 251.85" stroke="#dadada" stroke-width="0.8"/><rect x="46.90" y="248.45" width="6" height="5.9" rx="0.7" fill="#8a8a8a" stroke="#5c5c5c" stroke-width="0.5"/><rect x="47.20" y="248.15" width="3" height="1" fill="#6e6e6e"/><rect x="47.50" y="249.95" width="1.8" height="2.1" fill="#f0f0f0" opacity="0.9"/><rect x="50.10" y="249.95" width="2" height="2.1" fill="#dedede" opacity="0.9"/>
<line x1="35.4" y1="267.18" x2="41" y2="267.18" stroke="#8a8a8a" stroke-width="0.8" stroke-dasharray="1 1.2"/>
<path d="M47.00 265.68 L45.40 266.28 L42.30 268.88 L42.10 270.18 L43.50 270.98 L47.20 268.68z" fill="#8e8e8e" stroke="#666" stroke-width="0.45"/><path d="M43.20 269.58 L46.60 267.18" stroke="#dadada" stroke-width="0.8"/><rect x="46.90" y="263.78" width="6" height="5.9" rx="0.7" fill="#8a8a8a" stroke="#5c5c5c" stroke-width="0.5"/><rect x="47.20" y="263.48" width="3" height="1" fill="#6e6e6e"/><rect x="47.50" y="265.28" width="1.8" height="2.1" fill="#f0f0f0" opacity="0.9"/><rect x="50.10" y="265.28" width="2" height="2.1" fill="#dedede" opacity="0.9"/>
<line x1="35.4" y1="282.52" x2="41" y2="282.52" stroke="#8a8a8a" stroke-width="0.8" stroke-dasharray="1 1.2"/>
<path d="M47.00 281.02 L45.40 281.62 L42.30 284.22 L42.10 285.52 L43.50 286.32 L47.20 284.02z" fill="#8e8e8e" stroke="#666" stroke-width="0.45"/><path d="M43.20 284.92 L46.60 282.52" stroke="#dadada" stroke-width="0.8"/><rect x="46.90" y="279.12" width="6" height="5.9" rx="0.7" fill="#8a8a8a" stroke="#5c5c5c" stroke-width="0.5"/><rect x="47.20" y="278.82" width="3" height="1" fill="#6e6e6e"/><rect x="47.50" y="280.62" width="1.8" height="2.1" fill="#f0f0f0" opacity="0.9"/><rect x="50.10" y="280.62" width="2" height="2.1" fill="#dedede" opacity="0.9"/>
<line x1="35.4" y1="297.86" x2="41" y2="297.86" stroke="#8a8a8a" stroke-width="0.8" stroke-dasharray="1 1.2"/>
<path d="M47.00 296.36 L45.40 296.96 L42.30 299.56 L42.10 300.86 L43.50 301.66 L47.20 299.36z" fill="#8e8e8e" stroke="#666" stroke-width="0.45"/><path d="M43.20 300.26 L46.60 297.86" stroke="#dadada" stroke-width="0.8"/><rect x="46.90" y="294.46" width="6" height="5.9" rx="0.7" fill="#8a8a8a" stroke="#5c5c5c" stroke-width="0.5"/><rect x="47.20" y="294.16" width="3" height="1" fill="#6e6e6e"/><rect x="47.50" y="295.96" width="1.8" height="2.1" fill="#f0f0f0" opacity="0.9"/><rect x="50.10" y="295.96" width="2" height="2.1" fill="#dedede" opacity="0.9"/>
<line x1="35.4" y1="313.19" x2="41" y2="313.19" stroke="#8a8a8a" stroke-width="0.8" stroke-dasharray="1 1.2"/>
<path d="M47.00 311.69 L45.40 312.29 L42.30 314.89 L42.10 316.19 L43.50 316.99 L47.20 314.69z" fill="#8e8e8e" stroke="#666" stroke-width="0.45"/><path d="M43.20 315.59 L46.60 313.19" stroke="#dadada" stroke-width="0.8"/><rect x="46.90" y="309.79" width="6" height="5.9" rx="0.7" fill="#8a8a8a" stroke="#5c5c5c" stroke-width="0.5"/><rect x="47.20" y="309.49" width="3" height="1" fill="#6e6e6e"/><rect x="47.50" y="311.29" width="1.8" height="2.1" fill="#f0f0f0" opacity="0.9"/><rect x="50.10" y="311.29" width="2" height="2.1" fill="#dedede" opacity="0.9"/>
<line x1="35.4" y1="328.52" x2="41" y2="328.52" stroke="#8a8a8a" stroke-width="0.8" stroke-dasharray="1 1.2"/>
<path d="M47.00 327.02 L45.40 327.62 L42.30 330.23 L42.10 331.52 L43.50 332.32 L47.20 330.02z" fill="#8e8e8e" stroke="#666" stroke-width="0.45"/><path d="M43.20 330.93 L46.60 328.52" stroke="#dadada" stroke-width="0.8"/><rect x="46.90" y="325.12" width="6" height="5.9" rx="0.7" fill="#8a8a8a" stroke="#5c5c5c" stroke-width="0.5"/><rect x="47.20" y="324.82" width="3" height="1" fill="#6e6e6e"/><rect x="47.50" y="326.62" width="1.8" height="2.1" fill="#f0f0f0" opacity="0.9"/><rect x="50.10" y="326.62" width="2" height="2.1" fill="#dedede" opacity="0.9"/>
<line x1="26.4" y1="343.86" x2="29.5" y2="343.86" stroke="#8a8a8a" stroke-width="0.8" stroke-dasharray="1 1"/>
<rect x="19.20" y="340.46" width="6.8" height="6.8" fill="#fbfbfb" stroke="#9a9ea6" stroke-width="0.8"/><rect x="20.60" y="343.41" width="4" height="0.9" fill="#2a3350"/><rect x="22.15" y="341.86" width="0.9" height="4" fill="#2a3350"/>
<path d="M30.20 340.66 q0 -1 1 -1 h2.6 l0.9 1 h4 q0.7 0 0.7 0.8 v5.4 q0 0.8 -0.8 0.8 h-7.6 q-0.8 0 -0.8 -0.8z" fill="url(#fg)" stroke="#e0a63a" stroke-width="0.5"/><rect x="30.70" y="341.56" width="8" height="0.7" fill="#fde9a8" opacity="0.9"/>
<line x1="26.4" y1="359.19" x2="29.5" y2="359.19" stroke="#8a8a8a" stroke-width="0.8" stroke-dasharray="1 1"/>
<rect x="19.20" y="355.79" width="6.8" height="6.8" fill="#fbfbfb" stroke="#9a9ea6" stroke-width="0.8"/><rect x="20.60" y="358.74" width="4" height="0.9" fill="#2a3350"/>
<path d="M30.10 362.49 v-5.6 q0 -0.8 0.8 -0.8 h2.2 l0.8 0.9 h3.4 v1.4" fill="#c9982c" stroke="#b98a22" stroke-width="0.4"/><path d="M30.20 362.59 l2.3 -4.3 h6.3 l-2.6 4.3z" fill="url(#fg2)" stroke="#c9982c" stroke-width="0.4"/>
<line x1="35.4" y1="374.53" x2="41" y2="374.53" stroke="#8a8a8a" stroke-width="0.8" stroke-dasharray="1 1.2"/>
<path d="M42.20 369.63 h4 M42.20 379.23 h4 M44.20 369.63 v9.6" stroke="#1a1a1a" stroke-width="1" fill="none"/><path d="M46.20 373.83 q1.6 -3.4 3.2 0 q1.6 3 3.6 0.2" stroke="#e02a3a" stroke-width="1.1" fill="none"/>
<line x1="35.4" y1="389.87" x2="41" y2="389.87" stroke="#8a8a8a" stroke-width="0.8" stroke-dasharray="1 1.2"/>
<path d="M42.20 384.97 h4 M42.20 394.57 h4 M44.20 384.97 v9.6" stroke="#1a1a1a" stroke-width="1" fill="none"/><path d="M46.20 389.17 q1.6 -3.4 3.2 0 q1.6 3 3.6 0.2" stroke="#e02a3a" stroke-width="1.1" fill="none"/>
<line x1="26.4" y1="405.20" x2="29.5" y2="405.20" stroke="#8a8a8a" stroke-width="0.8" stroke-dasharray="1 1"/>
<rect x="19.20" y="401.80" width="6.8" height="6.8" fill="#fbfbfb" stroke="#9a9ea6" stroke-width="0.8"/><rect x="20.60" y="404.75" width="4" height="0.9" fill="#2a3350"/><rect x="22.15" y="403.20" width="0.9" height="4" fill="#2a3350"/>
<path d="M30.20 402.00 q0 -1 1 -1 h2.6 l0.9 1 h4 q0.7 0 0.7 0.8 v5.4 q0 0.8 -0.8 0.8 h-7.6 q-0.8 0 -0.8 -0.8z" fill="url(#fg)" stroke="#e0a63a" stroke-width="0.5"/><rect x="30.70" y="402.90" width="8" height="0.7" fill="#fde9a8" opacity="0.9"/>
<line x1="26.4" y1="420.53" x2="29.5" y2="420.53" stroke="#8a8a8a" stroke-width="0.8" stroke-dasharray="1 1"/>
<rect x="19.20" y="417.13" width="6.8" height="6.8" fill="#fbfbfb" stroke="#9a9ea6" stroke-width="0.8"/><rect x="20.60" y="420.08" width="4" height="0.9" fill="#2a3350"/><rect x="22.15" y="418.53" width="0.9" height="4" fill="#2a3350"/>
<path d="M30.20 417.33 q0 -1 1 -1 h2.6 l0.9 1 h4 q0.7 0 0.7 0.8 v5.4 q0 0.8 -0.8 0.8 h-7.6 q-0.8 0 -0.8 -0.8z" fill="url(#fg)" stroke="#e0a63a" stroke-width="0.5"/><rect x="30.70" y="418.23" width="8" height="0.7" fill="#fde9a8" opacity="0.9"/>
<line x1="26.4" y1="435.87" x2="29" y2="435.87" stroke="#8a8a8a" stroke-width="0.8" stroke-dasharray="1 1"/>
<rect x="19.20" y="432.47" width="6.8" height="6.8" fill="#fbfbfb" stroke="#9a9ea6" stroke-width="0.8"/><rect x="20.60" y="435.42" width="4" height="0.9" fill="#2a3350"/><rect x="22.15" y="433.87" width="0.9" height="4" fill="#2a3350"/>
<rect x="29.40" y="431.57" width="10.4" height="8.4" fill="url(#mg)" stroke="#1a8a9a" stroke-width="0.5"/><rect x="29.40" y="431.57" width="4" height="1.4" fill="#bff"/><circle cx="34.60" cy="436.17" r="2.5" fill="#ffe020" stroke="#111" stroke-width="0.5"/><path d="M34.60 436.17 v-2.5 a2.5 2.5 0 0 1 2.5 2.5z M34.60 436.17 v2.5 a2.5 2.5 0 0 1 -2.5 -2.5z" fill="#111"/>
<path d="M45.6 433.37 v-1.2 a1.6 1.6 0 0 1 3.2 0" fill="none" stroke="#c4c4c4" stroke-width="0.8"/><rect x="45" y="432.97" width="4.6" height="3.6" rx="0.8" fill="#e4e4e4" stroke="#c8c8c8" stroke-width="0.4"/>
<rect x="6.25" y="33" width="5.69" height="0.8" fill="#222"/>
<rect x="33.75" y="33" width="6.77" height="0.8" fill="#222"/>
<rect x="62.50" y="33" width="6.59" height="0.8" fill="#222"/>
<rect x="96.25" y="33" width="6.53" height="0.8" fill="#222"/>
<rect x="489.50" y="33" width="6.80" height="0.8" fill="#222"/>
<rect x="557.50" y="33" width="7.02" height="0.8" fill="#222"/>
<text x="18.00" y="13.30" font-size="10.3" fill="#1a1a1a" textLength="130.50" lengthAdjust="spacingAndGlyphs">Untitled - HyperWorks 2022.3</text>
<text x="6.25" y="31.80" font-size="10.5" fill="#1a1a1a" textLength="15.00" lengthAdjust="spacingAndGlyphs">File</text>
<text x="33.75" y="31.80" font-size="10.5" fill="#1a1a1a" textLength="17.50" lengthAdjust="spacingAndGlyphs">Edit</text>
<text x="62.50" y="31.80" font-size="10.5" fill="#1a1a1a" textLength="21.25" lengthAdjust="spacingAndGlyphs">View</text>
<text x="96.25" y="31.80" font-size="10.5" fill="#1a1a1a" textLength="57.00" lengthAdjust="spacingAndGlyphs">Vehicle Tools</text>
<text x="165.50" y="31.80" font-size="10.5" fill="#1a1a1a" textLength="52.75" lengthAdjust="spacingAndGlyphs">SolverMode</text>
<text x="231.25" y="31.80" font-size="10.5" fill="#1a1a1a" textLength="27.50" lengthAdjust="spacingAndGlyphs">Model</text>
<text x="271.75" y="31.80" font-size="10.5" fill="#1a1a1a" textLength="34.50" lengthAdjust="spacingAndGlyphs">Analysis</text>
<text x="319.00" y="31.80" font-size="10.5" fill="#1a1a1a" textLength="23.00" lengthAdjust="spacingAndGlyphs">Tools</text>
<text x="354.50" y="31.80" font-size="10.5" fill="#1a1a1a" textLength="40.00" lengthAdjust="spacingAndGlyphs">FlexTools</text>
<text x="407.50" y="31.80" font-size="10.5" fill="#1a1a1a" textLength="25.75" lengthAdjust="spacingAndGlyphs">EDEM</text>
<text x="445.75" y="31.80" font-size="10.5" fill="#1a1a1a" textLength="31.25" lengthAdjust="spacingAndGlyphs">Macros</text>
<text x="489.50" y="31.80" font-size="10.5" fill="#1a1a1a" textLength="55.00" lengthAdjust="spacingAndGlyphs">Applications</text>
<text x="557.50" y="31.80" font-size="10.5" fill="#1a1a1a" textLength="20.00" lengthAdjust="spacingAndGlyphs">Help</text>
<text x="1234.50" y="49.30" font-size="9.5" fill="#111" textLength="4.00" lengthAdjust="spacingAndGlyphs">1</text>
<text x="1243.00" y="49.30" font-size="9.5" fill="#111" textLength="12.50" lengthAdjust="spacingAndGlyphs">of 1</text>
<text x="2.60" y="70.00" font-size="9.3" fill="#222" textLength="31.80" lengthAdjust="spacingAndGlyphs">Session</text>
<text x="47.00" y="70.00" font-size="9.3" fill="#222" textLength="28.00" lengthAdjust="spacingAndGlyphs">Project</text>
<text x="5.00" y="88.00" font-size="10.5" fill="#111" textLength="33.00" lengthAdjust="spacingAndGlyphs">Objects</text>
<text x="280.00" y="88.00" font-size="10.5" fill="#111" textLength="39.00" lengthAdjust="spacingAndGlyphs">Varname</text>
<text x="344.80" y="88.00" font-size="10.5" fill="#111" textLength="9.40" lengthAdjust="spacingAndGlyphs">ID</text>
<text x="41.60" y="101.70" font-size="9" fill="#000" textLength="22.80" lengthAdjust="spacingAndGlyphs" stroke="#000" stroke-width="0.22">Model</text>
<text x="279.30" y="101.70" font-size="9" fill="#000" textLength="39.50" lengthAdjust="spacingAndGlyphs" stroke="#000" stroke-width="0.15">the_model</text>
<text x="43.60" y="117.03" font-size="9" fill="#000" textLength="40.47" lengthAdjust="spacingAndGlyphs" stroke="#000" stroke-width="0.22">Bodies  (9)</text>
<text x="43.60" y="132.37" font-size="9" fill="#000" textLength="51.63" lengthAdjust="spacingAndGlyphs" stroke="#000" stroke-width="0.22">Data Sets  (2)</text>
<text x="43.60" y="147.70" font-size="9" fill="#000" textLength="48.37" lengthAdjust="spacingAndGlyphs" stroke="#000" stroke-width="0.22">Graphics  (8)</text>
<text x="43.60" y="163.04" font-size="9" fill="#000" textLength="40.78" lengthAdjust="spacingAndGlyphs" stroke="#000" stroke-width="0.22">Joints  (11)</text>
<text x="57.00" y="178.38" font-size="9" fill="#000" textLength="24.66" lengthAdjust="spacingAndGlyphs" stroke="#000" stroke-width="0.22">Joint 0</text>
<text x="279.30" y="178.38" font-size="9" fill="#000" textLength="11.29" lengthAdjust="spacingAndGlyphs" stroke="#000" stroke-width="0.15">j_0</text>
<text x="325.50" y="178.38" font-size="9" fill="#000" textLength="26.10" lengthAdjust="spacingAndGlyphs" stroke="#000" stroke-width="0.15">301001</text>
<text x="57.00" y="193.71" font-size="9" fill="#000" textLength="24.66" lengthAdjust="spacingAndGlyphs" stroke="#000" stroke-width="0.22">Joint 1</text>
<text x="279.30" y="193.71" font-size="9" fill="#000" textLength="11.29" lengthAdjust="spacingAndGlyphs" stroke="#000" stroke-width="0.15">j_1</text>
<text x="325.50" y="193.71" font-size="9" fill="#000" textLength="26.10" lengthAdjust="spacingAndGlyphs" stroke="#000" stroke-width="0.15">301002</text>
<text x="57.00" y="209.04" font-size="9" fill="#000" textLength="24.66" lengthAdjust="spacingAndGlyphs" stroke="#000" stroke-width="0.22">Joint 2</text>
<text x="279.30" y="209.04" font-size="9" fill="#000" textLength="11.29" lengthAdjust="spacingAndGlyphs" stroke="#000" stroke-width="0.15">j_2</text>
<text x="325.50" y="209.04" font-size="9" fill="#000" textLength="26.10" lengthAdjust="spacingAndGlyphs" stroke="#000" stroke-width="0.15">301003</text>
<text x="57.00" y="224.38" font-size="9" fill="#000" textLength="24.66" lengthAdjust="spacingAndGlyphs" stroke="#000" stroke-width="0.22">Joint 3</text>
<text x="279.30" y="224.38" font-size="9" fill="#000" textLength="11.29" lengthAdjust="spacingAndGlyphs" stroke="#000" stroke-width="0.15">j_3</text>
<text x="325.50" y="224.38" font-size="9" fill="#000" textLength="26.10" lengthAdjust="spacingAndGlyphs" stroke="#000" stroke-width="0.15">301004</text>
<text x="57.00" y="239.72" font-size="9" fill="#000" textLength="24.66" lengthAdjust="spacingAndGlyphs" stroke="#000" stroke-width="0.22">Joint 4</text>
<text x="279.30" y="239.72" font-size="9" fill="#000" textLength="11.29" lengthAdjust="spacingAndGlyphs" stroke="#000" stroke-width="0.15">j_4</text>
<text x="325.50" y="239.72" font-size="9" fill="#000" textLength="26.10" lengthAdjust="spacingAndGlyphs" stroke="#000" stroke-width="0.15">301005</text>
<text x="57.00" y="255.05" font-size="9" fill="#000" textLength="24.66" lengthAdjust="spacingAndGlyphs" stroke="#000" stroke-width="0.22">Joint 5</text>
<text x="279.30" y="255.05" font-size="9" fill="#000" textLength="11.29" lengthAdjust="spacingAndGlyphs" stroke="#000" stroke-width="0.15">j_5</text>
<text x="325.50" y="255.05" font-size="9" fill="#000" textLength="26.10" lengthAdjust="spacingAndGlyphs" stroke="#000" stroke-width="0.15">301006</text>
<text x="57.00" y="270.38" font-size="9" fill="#000" textLength="24.66" lengthAdjust="spacingAndGlyphs" stroke="#000" stroke-width="0.22">Joint 6</text>
<text x="279.30" y="270.38" font-size="9" fill="#000" textLength="11.29" lengthAdjust="spacingAndGlyphs" stroke="#000" stroke-width="0.15">j_6</text>
<text x="325.50" y="270.38" font-size="9" fill="#000" textLength="26.10" lengthAdjust="spacingAndGlyphs" stroke="#000" stroke-width="0.15">301007</text>
<text x="57.00" y="285.72" font-size="9" fill="#000" textLength="24.66" lengthAdjust="spacingAndGlyphs" stroke="#000" stroke-width="0.22">Joint 7</text>
<text x="279.30" y="285.72" font-size="9" fill="#000" textLength="11.29" lengthAdjust="spacingAndGlyphs" stroke="#000" stroke-width="0.15">j_7</text>
<text x="325.50" y="285.72" font-size="9" fill="#000" textLength="26.10" lengthAdjust="spacingAndGlyphs" stroke="#000" stroke-width="0.15">301008</text>
<text x="57.00" y="301.06" font-size="9" fill="#000" textLength="24.66" lengthAdjust="spacingAndGlyphs" stroke="#000" stroke-width="0.22">Joint 8</text>
<text x="279.30" y="301.06" font-size="9" fill="#000" textLength="11.29" lengthAdjust="spacingAndGlyphs" stroke="#000" stroke-width="0.15">j_8</text>
<text x="325.50" y="301.06" font-size="9" fill="#000" textLength="26.10" lengthAdjust="spacingAndGlyphs" stroke="#000" stroke-width="0.15">301009</text>
<text x="57.00" y="316.39" font-size="9" fill="#000" textLength="24.66" lengthAdjust="spacingAndGlyphs" stroke="#000" stroke-width="0.22">Joint 9</text>
<text x="279.30" y="316.39" font-size="9" fill="#000" textLength="11.29" lengthAdjust="spacingAndGlyphs" stroke="#000" stroke-width="0.15">j_9</text>
<text x="325.50" y="316.39" font-size="9" fill="#000" textLength="26.10" lengthAdjust="spacingAndGlyphs" stroke="#000" stroke-width="0.15">301010</text>
<text x="57.00" y="331.73" font-size="9" fill="#000" textLength="29.31" lengthAdjust="spacingAndGlyphs" stroke="#000" stroke-width="0.22">Joint 10</text>
<text x="279.30" y="331.73" font-size="9" fill="#000" textLength="15.99" lengthAdjust="spacingAndGlyphs" stroke="#000" stroke-width="0.15">j_10</text>
<text x="325.50" y="331.73" font-size="9" fill="#000" textLength="26.10" lengthAdjust="spacingAndGlyphs" stroke="#000" stroke-width="0.15">301011</text>
<text x="43.60" y="347.06" font-size="9" fill="#000" textLength="45.10" lengthAdjust="spacingAndGlyphs" stroke="#000" stroke-width="0.22">Markers  (1)</text>
<text x="43.60" y="362.39" font-size="9" fill="#000" textLength="44.18" lengthAdjust="spacingAndGlyphs" stroke="#000" stroke-width="0.22">Motions  (2)</text>
<text x="56.50" y="377.73" font-size="9" fill="#000" textLength="32.10" lengthAdjust="spacingAndGlyphs" stroke="#000" stroke-width="0.22">Motion 0</text>
<text x="279.30" y="377.73" font-size="9" fill="#000" textLength="23.51" lengthAdjust="spacingAndGlyphs" stroke="#000" stroke-width="0.15">mot_0</text>
<text x="325.50" y="377.73" font-size="9" fill="#000" textLength="26.10" lengthAdjust="spacingAndGlyphs" stroke="#000" stroke-width="0.15">301001</text>
<text x="56.50" y="393.07" font-size="9" fill="#000" textLength="32.10" lengthAdjust="spacingAndGlyphs" stroke="#000" stroke-width="0.22">Motion 1</text>
<text x="279.30" y="393.07" font-size="9" fill="#000" textLength="23.51" lengthAdjust="spacingAndGlyphs" stroke="#000" stroke-width="0.15">mot_1</text>
<text x="325.50" y="393.07" font-size="9" fill="#000" textLength="26.10" lengthAdjust="spacingAndGlyphs" stroke="#000" stroke-width="0.15">301002</text>
<text x="43.60" y="408.40" font-size="9" fill="#000" textLength="42.80" lengthAdjust="spacingAndGlyphs" stroke="#000" stroke-width="0.22">Points  (12)</text>
<text x="43.60" y="423.74" font-size="9" fill="#000" textLength="42.79" lengthAdjust="spacingAndGlyphs" stroke="#000" stroke-width="0.22">Vectors  (3)</text>
<text x="54.60" y="439.07" font-size="9" fill="#000" textLength="17.20" lengthAdjust="spacingAndGlyphs" stroke="#000" stroke-width="0.22">Misc</text>
<text x="279.30" y="439.07" font-size="9" fill="#000" textLength="34.78" lengthAdjust="spacingAndGlyphs" stroke="#000" stroke-width="0.15">sys_misc</text>
<text x="409.30" y="437.60" font-size="10.5" fill="#fff" textLength="6.80" lengthAdjust="spacingAndGlyphs">Y</text>
<text x="457.40" y="481.00" font-size="10.5" fill="#fff" textLength="6.80" lengthAdjust="spacingAndGlyphs">X</text>
<text x="402.00" y="489.20" font-size="10.5" fill="#fff" textLength="5.80" lengthAdjust="spacingAndGlyphs">Z</text>
<text x="967.50" y="86.30" font-size="11.3" fill="#fff" textLength="302.50" lengthAdjust="spacingAndGlyphs">D:/Hyperspawn/MotionView/HYP/MotionView/Ite_1.mdl</text>
<text x="478.60" y="575.60" font-size="9" fill="#111" textLength="23.40" lengthAdjust="spacingAndGlyphs">mot_0</text>
<text x="391.90" y="592.20" font-size="9" fill="#111" textLength="47.50" lengthAdjust="spacingAndGlyphs">Connectivity</text>
<text x="391.90" y="605.50" font-size="9.6" fill="#111" textLength="47.50" lengthAdjust="spacingAndGlyphs" font-weight="bold">Properties</text>
<text x="480.60" y="597.00" font-size="9.2" fill="#111" textLength="39.60" lengthAdjust="spacingAndGlyphs">Define by:</text>
<text x="552.00" y="597.00" font-size="9.2" fill="#111" textLength="46.00" lengthAdjust="spacingAndGlyphs">Expression:</text>
<text x="483.80" y="611.50" font-size="9.2" fill="#111" textLength="44.00" lengthAdjust="spacingAndGlyphs">Expression</text>
<text x="553.60" y="611.20" font-size="9.2" fill="#111" textLength="83.60" lengthAdjust="spacingAndGlyphs">3*0.119200*sin(TIME)</text>
<text x="3.10" y="713.30" font-size="9.3" fill="#222" textLength="26.50" lengthAdjust="spacingAndGlyphs">Ready</text>
</svg>
</body></html>
